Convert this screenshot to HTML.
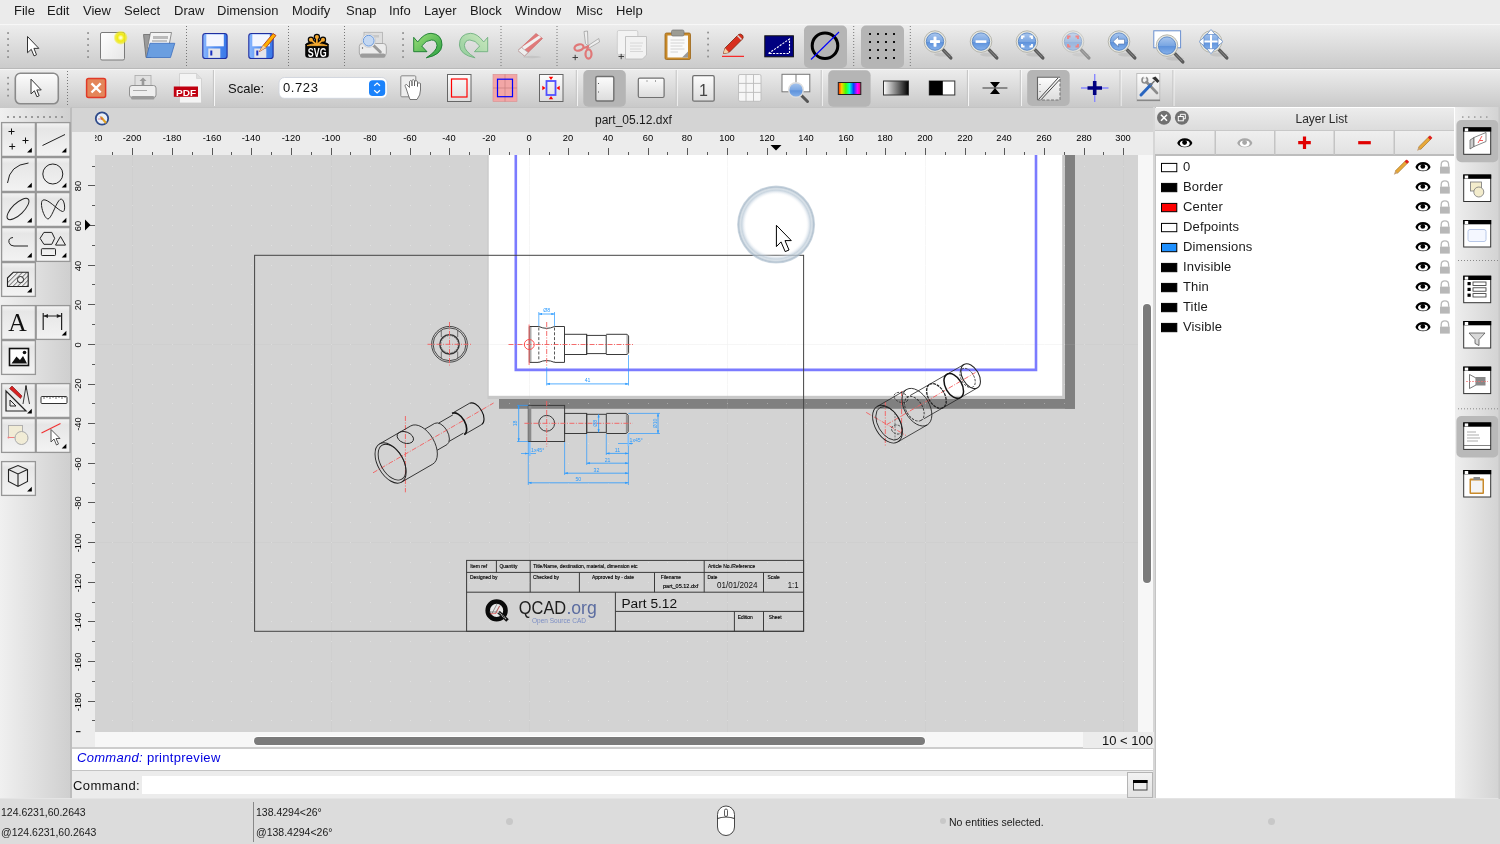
<!DOCTYPE html><html><head><meta charset="utf-8"><style>
*{margin:0;padding:0;box-sizing:border-box}
html,body{width:1500px;height:844px;overflow:hidden;background:#ececec;font-family:"Liberation Sans",sans-serif;color:#222}
.a{position:absolute}
svg{position:absolute;overflow:visible}
#menubar{left:0;top:0;width:1500px;height:24px;background:#ebebeb}
#menubar span{position:absolute;top:3.3px;font-size:13px;color:#1a1a1a;line-height:15px}
#tb1{left:0;top:24px;width:1500px;height:45px;background:linear-gradient(#ededed,#cbcbcb);border-top:1px solid #f7f7f7;border-bottom:1px solid #b9b9b9}
#tb2{left:0;top:69px;width:1500px;height:38.5px;background:linear-gradient(#ececec,#c9c9c9);border-top:1px solid #f5f5f5;border-bottom:1px solid #b4b4b4}
#toolbox{left:0;top:107px;width:72px;height:692px;background:linear-gradient(90deg,#f0f0f0,#cfcfcf);border-right:2px solid #bdbdbd;border-top:1px solid #c8c8c8}
#mdititle{left:72px;top:107px;width:1082px;height:25px;background:#d4d4d4;border-top:1px solid #c4c4c4}
#hruler{left:72px;top:132px;width:1082px;height:23px;background:#ececec}
#vruler{left:72px;top:155px;width:23px;height:593px;background:#ececec}
#canvas{left:95px;top:155px;width:1043px;height:577px;background:#d3d3d3;overflow:hidden}
#vscroll{left:1138px;top:155px;width:16px;height:593px;background:#f7f7f7}
#hscroll{left:95px;top:732px;width:1059px;height:16px;background:#f7f7f7}
#cmdhist{left:72px;top:747px;width:1082px;height:24px;background:#fff;border-top:2px solid #cdcdcd;border-bottom:1px solid #c4c4c4}
#cmdrow{left:72px;top:771px;width:1082px;height:28px;background:#ececec}
#status{left:0;top:798px;width:1500px;height:46px;background:#dcdcdc;border-top:1px solid #e4e4e4}
#layerpanel{left:1153px;top:107px;width:302px;height:692px;background:#fff;border-left:2px solid #d6d6d6;box-shadow:inset 1px 0 0 #c4c4c4}
body{will-change:transform}
#rdock{left:1455px;top:107px;width:45px;height:692px;background:linear-gradient(90deg,#eeeeee,#d2d2d2)}

.hl{top:-0.5px;width:40px;text-align:center;font-size:10px;line-height:12px;color:#000;transform:scale(0.93)}
.vl{left:58px;width:40px;height:14px;text-align:center;font-size:10px;line-height:14px;color:#000;transform:rotate(-90deg) scale(0.93)}
</style></head><body><div id="menubar" class="a"><span style="left:14px">File</span><span style="left:47px">Edit</span><span style="left:83px">View</span><span style="left:124px">Select</span><span style="left:174px">Draw</span><span style="left:217px">Dimension</span><span style="left:292px">Modify</span><span style="left:346px">Snap</span><span style="left:389px">Info</span><span style="left:424px">Layer</span><span style="left:470px">Block</span><span style="left:515px">Window</span><span style="left:576px">Misc</span><span style="left:616px">Help</span></div>
<div id="tb1" class="a"></div><div id="tb2" class="a"></div>
<svg class="a" style="left:0;top:0" width="1500" height="110" viewBox="0 0 1500 110"><defs><linearGradient id="lens" x1="0" y1="0" x2="0" y2="1"><stop offset="0" stop-color="#a9c6ee"/><stop offset="0.5" stop-color="#7aa6e2"/><stop offset="0.55" stop-color="#5f93dc"/><stop offset="1" stop-color="#86b1ea"/></linearGradient><linearGradient id="paper" x1="0" y1="0" x2="1" y2="1"><stop offset="0" stop-color="#ffffff"/><stop offset="1" stop-color="#e6e6e6"/></linearGradient><linearGradient id="flop" x1="0" y1="0" x2="1" y2="0"><stop offset="0" stop-color="#8ab8ff"/><stop offset="0.5" stop-color="#4f8cf0"/><stop offset="1" stop-color="#3a78e8"/></linearGradient><linearGradient id="btn" x1="0" y1="0" x2="0" y2="1"><stop offset="0" stop-color="#fdfdfd"/><stop offset="1" stop-color="#dcdcdc"/></linearGradient><linearGradient id="rainbow" x1="0" y1="0" x2="1" y2="0"><stop offset="0" stop-color="#ff2000"/><stop offset="0.15" stop-color="#ffd000"/><stop offset="0.33" stop-color="#40ff00"/><stop offset="0.5" stop-color="#00ffd0"/><stop offset="0.68" stop-color="#0040ff"/><stop offset="0.85" stop-color="#ff00ff"/><stop offset="1" stop-color="#ff0060"/></linearGradient><linearGradient id="grey" x1="0" y1="0" x2="1" y2="0"><stop offset="0" stop-color="#fff"/><stop offset="1" stop-color="#000"/></linearGradient><radialGradient id="glow"><stop offset="0.1" stop-color="#ffffd0"/><stop offset="0.45" stop-color="#f2ec10"/><stop offset="0.75" stop-color="#eee820" stop-opacity="0.8"/><stop offset="1" stop-color="#f0f000" stop-opacity="0"/></radialGradient><linearGradient id="green" x1="0" y1="0" x2="1" y2="1"><stop offset="0" stop-color="#9ee07a"/><stop offset="1" stop-color="#2aa040"/></linearGradient><linearGradient id="green2" x1="1" y1="0" x2="0" y2="1"><stop offset="0" stop-color="#cde9c0"/><stop offset="1" stop-color="#90cc9a"/></linearGradient></defs><rect x="7.2" y="32.2" width="1.7" height="1.7" fill="#8a8a8a"/><rect x="7.2" y="38.2" width="1.7" height="1.7" fill="#8a8a8a"/><rect x="7.2" y="44.2" width="1.7" height="1.7" fill="#8a8a8a"/><rect x="7.2" y="50.2" width="1.7" height="1.7" fill="#8a8a8a"/><rect x="7.2" y="56.2" width="1.7" height="1.7" fill="#8a8a8a"/><path d="M27.50 36.50L27.50 52.78L31.28 49.31L34.01 55.92L36.53 54.77L33.91 48.37L38.84 48.37Z" fill="#fff" stroke="#333" stroke-width="1" stroke-linejoin="round"/><rect x="87.2" y="32.2" width="1.7" height="1.7" fill="#8a8a8a"/><rect x="87.2" y="38.2" width="1.7" height="1.7" fill="#8a8a8a"/><rect x="87.2" y="44.2" width="1.7" height="1.7" fill="#8a8a8a"/><rect x="87.2" y="50.2" width="1.7" height="1.7" fill="#8a8a8a"/><rect x="87.2" y="56.2" width="1.7" height="1.7" fill="#8a8a8a"/><rect x="100.5" y="32.5" width="24" height="27.5" rx="1.5" fill="url(#paper)" stroke="#7a7a7a" stroke-width="1"/><circle cx="120.7" cy="37.7" r="7.2" fill="url(#glow)"/><line x1="186.5" y1="26" x2="186.5" y2="66" stroke="#777" stroke-width="1" stroke-dasharray="1 2"/><path d="M143.5 34.5H150L151 57.5H146Z" fill="#9a9a9a" stroke="#6a6a6a" stroke-width="0.8"/><path d="M150.5 32.5H171.5L168.5 48H147.5Z" fill="#f4f4f4" stroke="#777" stroke-width="0.8"/><rect x="153" y="36" width="15" height="3" fill="#bbb"/><rect x="152" y="40" width="15" height="2" fill="#c4c4c4"/><path d="M150 43.3H174.8L170.5 57.5H146.5Z" fill="#6a9ee0" stroke="#3c6fbf" stroke-width="0.8"/><rect x="202.8" y="33.5" width="24.3" height="25" rx="2.6" fill="url(#flop)" stroke="#1f2ea0" stroke-width="1.1"/><rect x="206.3" y="34.3" width="17.5" height="12" fill="#f3f6ff"/><rect x="208.3" y="48.5" width="12" height="9.3" fill="#e4e4ea"/><rect x="210.3" y="50.5" width="2" height="5" fill="#1a30c0"/><rect x="248.8" y="33.5" width="24.3" height="25" rx="2.6" fill="url(#flop)" stroke="#1f2ea0" stroke-width="1.1"/><rect x="252.3" y="34.3" width="17.5" height="12" fill="#f3f6ff"/><rect x="254.3" y="48.5" width="12" height="9.3" fill="#e4e4ea"/><rect x="256.3" y="50.5" width="2" height="5" fill="#1a30c0"/><path d="M259.5 51.5L263 45.5L273 33.5L276 35.5L266 47.5Z" fill="#ffb000" stroke="#b03010" stroke-width="0.8"/><path d="M259.5 51.5L263 45.5L266 47.5Z" fill="#f0d0a0"/><line x1="288.5" y1="26" x2="288.5" y2="66" stroke="#777" stroke-width="1" stroke-dasharray="1 2"/><rect x="305.2" y="43" width="23.6" height="14.8" rx="3" fill="#050505"/><line x1="316.9" y1="45" x2="310.9" y2="39.7" stroke="#050505" stroke-width="4.2" stroke-linecap="round"/><circle cx="310.9" cy="39.7" r="3.2" fill="#050505"/><line x1="316.9" y1="45" x2="316.9" y2="36.9" stroke="#050505" stroke-width="4.2" stroke-linecap="round"/><circle cx="316.9" cy="36.9" r="3.2" fill="#050505"/><line x1="316.9" y1="45" x2="323" y2="39.7" stroke="#050505" stroke-width="4.2" stroke-linecap="round"/><circle cx="323" cy="39.7" r="3.2" fill="#050505"/><path d="M306 45.5Q311 41 316.9 45Q323 41 328 45.5" stroke="#050505" stroke-width="3" fill="none"/><line x1="316.9" y1="45" x2="310.9" y2="39.7" stroke="#f5a930" stroke-width="1.7"/><circle cx="310.9" cy="39.7" r="2" fill="#f5a930"/><line x1="316.9" y1="45" x2="316.9" y2="36.9" stroke="#f5a930" stroke-width="1.7"/><circle cx="316.9" cy="36.9" r="2" fill="#f5a930"/><line x1="316.9" y1="45" x2="323" y2="39.7" stroke="#f5a930" stroke-width="1.7"/><circle cx="323" cy="39.7" r="2" fill="#f5a930"/><path d="M307 45.6Q312 43.2 316.9 44.3Q322 43.2 327.2 45.6Z" fill="#f5a930" stroke="#f5a930" stroke-width="0.8"/><text x="317.2" y="57.2" font-size="13.2" font-weight="bold" fill="#fff" text-anchor="middle" font-family="Liberation Sans" textLength="18.7" lengthAdjust="spacingAndGlyphs">SVG</text><line x1="344.5" y1="26" x2="344.5" y2="66" stroke="#777" stroke-width="1" stroke-dasharray="1 2"/><rect x="364" y="32.3" width="18.5" height="13" fill="#dedede" stroke="#b0b0b0" stroke-width="0.8"/><rect x="367" y="35" width="12" height="2.5" fill="#c8c8c8"/><rect x="359.3" y="43.5" width="27" height="12.5" rx="3" fill="#ececec" stroke="#a0a0a0" stroke-width="0.9"/><rect x="360" y="53.5" width="25.5" height="4.2" rx="2" fill="#9c9c9c"/><circle cx="362.5" cy="48" r="0.7" fill="#555"/><line x1="373" y1="45" x2="380.3" y2="52" stroke="#9a9a9a" stroke-width="3" stroke-linecap="round"/><circle cx="368.7" cy="40.7" r="6.8" fill="#f4f4f4" stroke="#c8c8c8" stroke-width="0.8"/><circle cx="368.7" cy="40.7" r="5.4" fill="#c4d8f2" stroke="#5b8fd8" stroke-width="0.9"/><rect x="402.2" y="32.2" width="1.7" height="1.7" fill="#8a8a8a"/><rect x="402.2" y="38.2" width="1.7" height="1.7" fill="#8a8a8a"/><rect x="402.2" y="44.2" width="1.7" height="1.7" fill="#8a8a8a"/><rect x="402.2" y="50.2" width="1.7" height="1.7" fill="#8a8a8a"/><rect x="402.2" y="56.2" width="1.7" height="1.7" fill="#8a8a8a"/><path d="M413.7 37.3L417.7 42Q424 33.3 431 33.3Q442 34 442 45Q441.5 55 426.3 57.8Q437 51 437 45.5Q436.5 40 431.5 40Q426 40 421.7 46L427 51.7H413.7Z" fill="url(#green)" stroke="#177a2e" stroke-width="0.9" stroke-linejoin="round"/><path d="M487.7 37.3L483.7 42.0Q477.4 33.3 470.4 33.3Q459.4 34.0 459.4 45.0Q459.9 55.0 475.1 57.8Q464.4 51.0 464.4 45.5Q464.9 40.0 469.9 40.0Q475.4 40.0 479.7 46.0L474.4 51.7H487.7Z" fill="url(#green2)" stroke="#70b080" stroke-width="0.9" stroke-linejoin="round"/><line x1="501" y1="26" x2="501" y2="66" stroke="#777" stroke-width="1" stroke-dasharray="1 2"/><path d="M518 50.5L536 33.5L542.5 38.5L524.5 56Z" fill="#e07a7a" stroke="#c86060" stroke-width="0.6"/><path d="M522 47L539 35.5L541 37.5L524 50Z" fill="#f0f0f0"/><path d="M518 50.5L521.5 47.5L528 52.5L524.5 56Z" fill="#eee" stroke="#aaa" stroke-width="0.6"/><ellipse cx="532" cy="57" rx="9" ry="1.2" fill="#bbb" opacity="0.6"/><line x1="557" y1="26" x2="557" y2="66" stroke="#777" stroke-width="1" stroke-dasharray="1 2"/><path d="M585.5 43.5L584 31.5L587.5 31L588 46Z" fill="#eee" stroke="#999" stroke-width="0.7"/><path d="M587.5 46L598.8 38.5L599.5 42L589 48Z" fill="#eee" stroke="#999" stroke-width="0.7"/><ellipse cx="579" cy="47.5" rx="4.6" ry="3" fill="none" stroke="#e07878" stroke-width="2.2" transform="rotate(-15 579 47.5)"/><ellipse cx="588.5" cy="54" rx="3" ry="4.6" fill="none" stroke="#e07878" stroke-width="2.2"/><path d="M584 48L588 46.5L587 50" stroke="#e07878" stroke-width="2" fill="none"/><path d="M572.5 57.5H578M575.2 54.8V60.2" stroke="#333" stroke-width="0.9"/><rect x="617.3" y="30.5" width="20.5" height="24" rx="1.5" fill="#f3f3f3" stroke="#c8c8c8" stroke-width="0.8"/><path d="M625.5 36.5H646.5V55L642.5 59H625.5Z" fill="#f2f2f2" stroke="#bdbdbd" stroke-width="0.9"/><path d="M630 43H643M630 46H642M630 49H641M630 51.5H643" stroke="#d4d4d4" stroke-width="0.9"/><path d="M618.5 56.5H624M621.2 53.8V59.2" stroke="#333" stroke-width="0.9"/><rect x="665" y="33" width="25.5" height="26.5" rx="1.5" fill="#c98a2a" stroke="#9a6418" stroke-width="0.8"/><rect x="667.5" y="35.5" width="20.5" height="22" fill="#fafafa"/><rect x="671.5" y="30" width="12.5" height="6" rx="1.5" fill="#9c9c94" stroke="#777" stroke-width="0.7"/><path d="M670.5 40H684.5M670.5 43H684.5M670.5 46H682.5M670.5 49H684.5M670.5 52H678" stroke="#cfcfcf" stroke-width="0.9"/><path d="M682 57.5L688 51.5V57.5Z" fill="#999"/><rect x="707.2" y="31.7" width="1.7" height="1.7" fill="#8a8a8a"/><rect x="707.2" y="37.7" width="1.7" height="1.7" fill="#8a8a8a"/><rect x="707.2" y="43.7" width="1.7" height="1.7" fill="#8a8a8a"/><rect x="707.2" y="49.7" width="1.7" height="1.7" fill="#8a8a8a"/><rect x="707.2" y="55.7" width="1.7" height="1.7" fill="#8a8a8a"/><line x1="722" y1="56.3" x2="744" y2="56.3" stroke="#f00" stroke-width="1"/><path d="M723.5 53.5L725 48L738.5 34.5Q740.5 33.2 742.5 35.2Q744 37.2 742.5 39L729 52.5Z" fill="#d83020" stroke="#7a2810" stroke-width="0.8"/><path d="M723.5 53.5L725 48L729 52.5Z" fill="#f3d3a8"/><path d="M737.5 35.5L741.5 39.5" stroke="#ddd" stroke-width="1.5"/><rect x="764.8" y="35.8" width="28.6" height="21" fill="#000080" stroke="#111" stroke-width="1"/><path d="M768.5 53.5L789.5 39V53.5Z" fill="none" stroke="#fff" stroke-width="1.1" stroke-dasharray="2.2 1.2"/><rect x="804" y="25.5" width="43" height="42.5" rx="5" fill="#b5b5b5"/><circle cx="825" cy="45.7" r="12.8" fill="none" stroke="#000" stroke-width="3"/><line x1="811" y1="59.5" x2="839" y2="32" stroke="#0000ff" stroke-width="1.1"/><line x1="853.7" y1="26" x2="853.7" y2="66" stroke="#777" stroke-width="1" stroke-dasharray="1 2"/><rect x="861" y="25.5" width="43" height="42.5" rx="5" fill="#b5b5b5"/><rect x="869" y="33" width="2" height="2" fill="#111"/><rect x="869" y="41" width="2" height="2" fill="#111"/><rect x="869" y="49" width="2" height="2" fill="#111"/><rect x="869" y="57" width="2" height="2" fill="#111"/><rect x="877" y="33" width="2" height="2" fill="#111"/><rect x="877" y="41" width="2" height="2" fill="#111"/><rect x="877" y="49" width="2" height="2" fill="#111"/><rect x="877" y="57" width="2" height="2" fill="#111"/><rect x="885" y="33" width="2" height="2" fill="#111"/><rect x="885" y="41" width="2" height="2" fill="#111"/><rect x="885" y="49" width="2" height="2" fill="#111"/><rect x="885" y="57" width="2" height="2" fill="#111"/><rect x="893" y="33" width="2" height="2" fill="#111"/><rect x="893" y="41" width="2" height="2" fill="#111"/><rect x="893" y="49" width="2" height="2" fill="#111"/><rect x="893" y="57" width="2" height="2" fill="#111"/><line x1="910.3" y1="26" x2="910.3" y2="66" stroke="#777" stroke-width="1" stroke-dasharray="1 2"/><ellipse cx="943" cy="54.6" rx="9" ry="2" fill="#000" opacity="0.08"/><line x1="942.5" y1="49.1" x2="950.8" y2="57.900000000000006" stroke="#5a5a5a" stroke-width="3.4" stroke-linecap="round"/><line x1="944" y1="50.6" x2="950" y2="56.900000000000006" stroke="#8a8a8a" stroke-width="1" stroke-linecap="round"/><circle cx="935" cy="41.6" r="10.8" fill="#e8e8e0" stroke="#a8a8a0" stroke-width="0.8"/><circle cx="935" cy="41.6" r="8.7" fill="url(#lens)" stroke="#4a7bc0" stroke-width="0.8"/><path d="M930.2 41.6H939.8M935 36.8V46.4" stroke="#fff" stroke-width="2.8"/><path d="M930.2 41.6H939.8M935 36.8V46.4" stroke="#fff" stroke-width="2.2"/><ellipse cx="989" cy="54.6" rx="9" ry="2" fill="#000" opacity="0.08"/><line x1="988.5" y1="49.1" x2="996.8" y2="57.900000000000006" stroke="#5a5a5a" stroke-width="3.4" stroke-linecap="round"/><line x1="990" y1="50.6" x2="996" y2="56.900000000000006" stroke="#8a8a8a" stroke-width="1" stroke-linecap="round"/><circle cx="981" cy="41.6" r="10.8" fill="#e8e8e0" stroke="#a8a8a0" stroke-width="0.8"/><circle cx="981" cy="41.6" r="8.7" fill="url(#lens)" stroke="#4a7bc0" stroke-width="0.8"/><path d="M975.6 41.6H986.4" stroke="#fff" stroke-width="2.6"/><ellipse cx="1035" cy="54.6" rx="9" ry="2" fill="#000" opacity="0.08"/><line x1="1034.5" y1="49.1" x2="1042.8" y2="57.900000000000006" stroke="#5a5a5a" stroke-width="3.4" stroke-linecap="round"/><line x1="1036" y1="50.6" x2="1042" y2="56.900000000000006" stroke="#8a8a8a" stroke-width="1" stroke-linecap="round"/><circle cx="1027" cy="41.6" r="10.8" fill="#e8e8e0" stroke="#a8a8a0" stroke-width="0.8"/><circle cx="1027" cy="41.6" r="8.7" fill="url(#lens)" stroke="#4a7bc0" stroke-width="0.8"/><path d="M1022 39V36.5H1024.5M1029.5 36.5H1032V39M1032 44V46.5H1029.5M1024.5 46.5H1022V44" stroke="#fff" stroke-width="1.8" fill="none"/><g opacity="0.55"><ellipse cx="1081" cy="54.6" rx="9" ry="2" fill="#000" opacity="0.08"/><line x1="1080.5" y1="49.1" x2="1088.8" y2="57.900000000000006" stroke="#5a5a5a" stroke-width="3.4" stroke-linecap="round"/><line x1="1082" y1="50.6" x2="1088" y2="56.900000000000006" stroke="#8a8a8a" stroke-width="1" stroke-linecap="round"/><circle cx="1073" cy="41.6" r="10.8" fill="#e8e8e0" stroke="#a8a8a0" stroke-width="0.8"/><circle cx="1073" cy="41.6" r="8.7" fill="url(#lens)" stroke="#4a7bc0" stroke-width="0.8"/><path d="M1068 39V36.5H1070.5M1075.5 36.5H1078V39M1078 44V46.5H1075.5M1070.5 46.5H1068V44" stroke="#ff3a3a" stroke-width="1.8" fill="none"/></g><ellipse cx="1127" cy="54.6" rx="9" ry="2" fill="#000" opacity="0.08"/><line x1="1126.5" y1="49.1" x2="1134.8" y2="57.900000000000006" stroke="#5a5a5a" stroke-width="3.4" stroke-linecap="round"/><line x1="1128" y1="50.6" x2="1134" y2="56.900000000000006" stroke="#8a8a8a" stroke-width="1" stroke-linecap="round"/><circle cx="1119" cy="41.6" r="10.8" fill="#e8e8e0" stroke="#a8a8a0" stroke-width="0.8"/><circle cx="1119" cy="41.6" r="8.7" fill="url(#lens)" stroke="#4a7bc0" stroke-width="0.8"/><path d="M1113 41.6L1118.5 36.5V39.3H1124.5V44H1118.5V46.8Z" fill="#fff" stroke="#4a6ea8" stroke-width="0.6"/><rect x="1153.8" y="30.8" width="26.8" height="17" fill="#fff" stroke="#6a90d0" stroke-width="1"/><ellipse cx="1175" cy="58.6" rx="9" ry="2" fill="#000" opacity="0.08"/><line x1="1174.5" y1="53.1" x2="1182.8" y2="61.900000000000006" stroke="#5a5a5a" stroke-width="3.4" stroke-linecap="round"/><line x1="1176" y1="54.6" x2="1182" y2="60.900000000000006" stroke="#8a8a8a" stroke-width="1" stroke-linecap="round"/><circle cx="1167" cy="45.6" r="10.8" fill="#e8e8e0" stroke="#a8a8a0" stroke-width="0.8"/><circle cx="1167" cy="45.6" r="8.7" fill="url(#lens)" stroke="#4a7bc0" stroke-width="0.8"/><ellipse cx="1219" cy="54.6" rx="9" ry="2" fill="#000" opacity="0.08"/><line x1="1218.5" y1="49.1" x2="1226.8" y2="57.900000000000006" stroke="#5a5a5a" stroke-width="3.4" stroke-linecap="round"/><line x1="1220" y1="50.6" x2="1226" y2="56.900000000000006" stroke="#8a8a8a" stroke-width="1" stroke-linecap="round"/><circle cx="1211" cy="41.6" r="10.8" fill="#e8e8e0" stroke="#a8a8a0" stroke-width="0.8"/><circle cx="1211" cy="41.6" r="8.7" fill="url(#lens)" stroke="#4a7bc0" stroke-width="0.8"/><path d="M1211 33V50M1203 41.6H1219" stroke="#fff" stroke-width="2"/><path d="M1211 29.5L1206.8 34.5H1215.2ZM1211 53.7L1206.8 48.7H1215.2ZM1199 41.6L1204 37.4V45.8ZM1223 41.6L1218 37.4V45.8Z" fill="#fff" stroke="#5a86c8" stroke-width="0.7" stroke-linejoin="round"/><rect x="7.2" y="76.9" width="1.7" height="1.7" fill="#8a8a8a"/><rect x="7.2" y="82.8" width="1.7" height="1.7" fill="#8a8a8a"/><rect x="7.2" y="88.7" width="1.7" height="1.7" fill="#8a8a8a"/><rect x="7.2" y="94.8" width="1.7" height="1.7" fill="#8a8a8a"/><rect x="15.3" y="73.3" width="43" height="30.5" rx="5" fill="url(#btn)" stroke="#8a8a8a" stroke-width="1.6"/><path d="M31.00 79.20L31.00 93.92L34.42 90.79L36.89 96.78L39.17 95.73L36.80 89.94L41.26 89.94Z" fill="#fff" stroke="#333" stroke-width="1" stroke-linejoin="round"/><line x1="67.5" y1="71" x2="67.5" y2="105" stroke="#777" stroke-width="1" stroke-dasharray="1 2"/><rect x="86.6" y="78.4" width="19" height="19" rx="2" fill="#e4865a" stroke="#e03a28" stroke-width="1.5"/><path d="M91.5 83.3L100.7 92.5M100.7 83.3L91.5 92.5" stroke="#fff" stroke-width="2.4"/><rect x="135" y="75.5" width="16" height="11" fill="#e0e0e0" stroke="#aaa" stroke-width="0.8"/><path d="M143 77.5L139.5 81H141.7V85H144.3V81H146.5Z" fill="#999"/><rect x="129.5" y="85.5" width="26.5" height="12" rx="2.5" fill="#eee" stroke="#888" stroke-width="0.9"/><rect x="131" y="96" width="23.5" height="3.5" rx="1.5" fill="#9a9a9a"/><rect x="133" y="90" width="14" height="1" fill="#aaa"/><path d="M179.5 73.5H196.5L201.5 78.5V103H179.5Z" fill="#f4f4f4" stroke="#ccc" stroke-width="0.8"/><path d="M196.5 73.5V78.5H201.5" fill="#ddd" stroke="#ccc" stroke-width="0.6"/><rect x="173.8" y="86.5" width="24.2" height="10.3" fill="#c00010"/><text x="186" y="95.6" font-size="9.2" font-weight="bold" fill="#fff" text-anchor="middle" font-family="Liberation Sans" textLength="20" lengthAdjust="spacingAndGlyphs">PDF</text><rect x="213.9" y="70" width="1" height="36" fill="#fafafa"/><rect x="212.9" y="70" width="1" height="36" fill="#c4c4c4"/><rect x="279" y="77.5" width="108.3" height="20.8" rx="5.5" fill="#fff" stroke="#cfd4dc" stroke-width="0.9"/><rect x="369" y="80.2" width="16.2" height="15.8" rx="3.8" fill="#1a82fb"/><path d="M374.2 85.8L377.1 83L380 85.8M374.2 90.2L377.1 93L380 90.2" stroke="#fff" stroke-width="1.2" fill="none"/><rect x="400.8" y="75.8" width="15" height="21" rx="1" fill="#eee" stroke="#888" stroke-width="1"/><path d="M406 88Q404 84.5 406.5 84.5L409.5 87.5V81.5Q410.5 79.5 412 81.5V86V80.5Q413 78.5 414.5 80.5V86V81.5Q416 79.5 417.5 81.5V86.5V83.5Q419 82 420.5 83.5V90Q420.5 95 417 99.5H410Q408.5 96 406 88Z" fill="#fff" stroke="#555" stroke-width="0.8"/><rect x="447.5" y="74.5" width="23.5" height="27" fill="url(#btn)" stroke="#666" stroke-width="1"/><rect x="451.5" y="79" width="15.5" height="18" fill="none" stroke="#f00" stroke-width="1.2"/><rect x="493" y="74.3" width="24" height="27.3" fill="#f2a6a6" stroke="#d89090" stroke-width="0.6"/><path d="M505 74.3V101.6M493 88H517" stroke="#c88080" stroke-width="0.7"/><rect x="497.5" y="79.2" width="15" height="17.5" fill="none" stroke="#0000ff" stroke-width="1.2"/><rect x="539.5" y="74.5" width="23.5" height="27" fill="url(#btn)" stroke="#666" stroke-width="1"/><rect x="546.5" y="81" width="9" height="14" fill="none" stroke="#5050ff" stroke-width="1.8"/><path d="M551 80L548.8 76.8H553.2ZM551 96L548.8 99.2H553.2ZM545.5 88L542.3 85.8V90.2ZM556.5 88L559.7 85.8V90.2Z" fill="#f00"/><rect x="576.8" y="70" width="1" height="36" fill="#fafafa"/><rect x="575.8" y="70" width="1" height="36" fill="#c4c4c4"/><rect x="583.3" y="70" width="42.5" height="36.8" rx="5" fill="#b5b5b5"/><rect x="595.8" y="76.5" width="18" height="24.5" rx="1.5" fill="url(#btn)" stroke="#707070" stroke-width="1.4"/><rect x="598" y="83" width="1" height="1" fill="#555"/><rect x="598" y="91.5" width="1" height="1" fill="#555"/><rect x="638.3" y="78.2" width="25.8" height="19.3" rx="1.5" fill="url(#btn)" stroke="#707070" stroke-width="1.2"/><rect x="646.5" y="80.5" width="1" height="1" fill="#555"/><rect x="655" y="80.5" width="1" height="1" fill="#555"/><rect x="676.7" y="70" width="1" height="36" fill="#fafafa"/><rect x="675.7" y="70" width="1" height="36" fill="#c4c4c4"/><rect x="692.7" y="75.7" width="21.5" height="25.5" rx="1.5" fill="url(#btn)" stroke="#707070" stroke-width="1.3"/><text x="703.5" y="96" font-size="16" fill="#444" text-anchor="middle" font-family="Liberation Sans">1</text><rect x="738.5" y="74.5" width="22.5" height="26.8" rx="1.5" fill="#f6f6f6" stroke="#bbb" stroke-width="0.9"/><path d="M746 74.5V101.3M753.5 74.5V101.3M738.5 83.4H761M738.5 92.4H761" stroke="#bbb" stroke-width="0.9"/><rect x="782" y="74.3" width="27.8" height="17.5" fill="#fff" stroke="#777" stroke-width="1"/><line x1="796" y1="74.3" x2="796" y2="91.8" stroke="#777"/><line x1="801" y1="95" x2="807.5" y2="101.5" stroke="#555" stroke-width="3" stroke-linecap="round"/><circle cx="796" cy="90" r="7.3" fill="url(#lens)" stroke="#ddd" stroke-width="1.4"/><rect x="821.7" y="70" width="1" height="36" fill="#fafafa"/><rect x="820.7" y="70" width="1" height="36" fill="#c4c4c4"/><rect x="828.2" y="70.2" width="42.39999999999998" height="36.599999999999994" rx="5" fill="#b5b5b5"/><rect x="838.3" y="82.5" width="22.5" height="12" fill="url(#rainbow)" stroke="#222" stroke-width="1"/><rect x="883.5" y="81" width="25" height="14" fill="url(#grey)" stroke="#333" stroke-width="1"/><rect x="929.3" y="81" width="25.5" height="14" fill="#fff" stroke="#333" stroke-width="1"/><rect x="929.3" y="81" width="13.5" height="14" fill="#000"/><rect x="967.9" y="70" width="1" height="36" fill="#fafafa"/><rect x="966.9" y="70" width="1" height="36" fill="#c4c4c4"/><line x1="982.5" y1="88" x2="1007.4" y2="88" stroke="#555" stroke-width="1.2"/><path d="M990 82H1000L995 88ZM990 94H1000L995 88Z" fill="#000"/><rect x="1020.8" y="70" width="1" height="36" fill="#fafafa"/><rect x="1019.8" y="70" width="1" height="36" fill="#c4c4c4"/><rect x="1027.2" y="70" width="42.5" height="36" rx="5" fill="#b5b5b5"/><rect x="1037.5" y="77.2" width="22.5" height="22.8" fill="url(#btn)"/><path d="M1060 77.2H1037.5V100" fill="none" stroke="#666" stroke-width="1.1"/><path d="M1037.5 100H1060V77.2" fill="none" stroke="#777" stroke-width="1.1" stroke-dasharray="3 1.5"/><path d="M1038.5 99.5L1058 78M1041 99.8L1059.8 79.5" stroke="#444" stroke-width="1"/><rect x="1039.5" y="84" width="1" height="1" fill="#666"/><rect x="1039.5" y="91" width="1" height="1" fill="#666"/><path d="M1094.7 74V102M1081 88H1108.5" stroke="#8888ff" stroke-width="1.4"/><path d="M1094.7 81V95M1087.5 88H1102" stroke="#000080" stroke-width="3.6"/><rect x="1120.5" y="70" width="1" height="36" fill="#fafafa"/><rect x="1119.5" y="70" width="1" height="36" fill="#c4c4c4"/><rect x="1136.8" y="73.5" width="23" height="27.5" fill="url(#btn)" stroke="#bbb" stroke-width="0.9"/><rect x="1137" y="99.5" width="23" height="1.5" fill="#888"/><path d="M1146.5 82L1157 93" stroke="#8c8c8c" stroke-width="2.6" stroke-linecap="round"/><path d="M1141 95L1151 84.5" stroke="#2a66c0" stroke-width="3" stroke-linecap="round"/><path d="M1150 85.5L1154.5 81" stroke="#777" stroke-width="1.6"/><path d="M1152 78L1155.5 76.5L1159.5 81L1157.5 83Z" fill="#333"/><circle cx="1144.8" cy="80.2" r="2.8" fill="none" stroke="#8c8c8c" stroke-width="1.6"/><rect x="1143.5" y="76" width="2.6" height="3" fill="url(#btn)"/><rect x="1173.4" y="70" width="1" height="36" fill="#fafafa"/><rect x="1172.4" y="70" width="1" height="36" fill="#c4c4c4"/></svg>
<div class="a" style="left:228px;top:81px;font-size:13px;line-height:15px;color:#111">Scale:</div><div class="a" style="left:283px;top:80px;font-size:13px;line-height:15px;color:#111;letter-spacing:0.6px">0.723</div>
<div id="toolbox" class="a"></div>
<svg class="a" style="left:0;top:0" width="72" height="844" viewBox="0 0 72 844"><defs><linearGradient id="tbg" x1="0" y1="0" x2="0" y2="1"><stop offset="0" stop-color="#f4f4f4"/><stop offset="0.18" stop-color="#e6e6e6"/><stop offset="1" stop-color="#f3f3f3"/></linearGradient></defs><rect x="7.0" y="116" width="2" height="2" fill="#9a9a9a"/><rect x="13.0" y="116" width="2" height="2" fill="#9a9a9a"/><rect x="19.0" y="116" width="2" height="2" fill="#9a9a9a"/><rect x="25.0" y="116" width="2" height="2" fill="#9a9a9a"/><rect x="31.0" y="116" width="2" height="2" fill="#9a9a9a"/><rect x="37.0" y="116" width="2" height="2" fill="#9a9a9a"/><rect x="43.0" y="116" width="2" height="2" fill="#9a9a9a"/><rect x="49.0" y="116" width="2" height="2" fill="#9a9a9a"/><rect x="55.0" y="116" width="2" height="2" fill="#9a9a9a"/><rect x="61.0" y="116" width="2" height="2" fill="#9a9a9a"/><rect x="1.6" y="122.6" width="33.8" height="33.8" fill="url(#tbg)" stroke="#979797" stroke-width="1.3"/><path d="M31.8 147.7V152.4H27.1Z" fill="#000"/><rect x="36.2" y="122.6" width="33.8" height="33.8" fill="url(#tbg)" stroke="#979797" stroke-width="1.3"/><path d="M66.39999999999999 147.7V152.4H61.699999999999996Z" fill="#000"/><rect x="1.6" y="157.6" width="33.8" height="33.8" fill="url(#tbg)" stroke="#979797" stroke-width="1.3"/><path d="M31.8 182.7V187.4H27.1Z" fill="#000"/><rect x="36.2" y="157.6" width="33.8" height="33.8" fill="url(#tbg)" stroke="#979797" stroke-width="1.3"/><path d="M66.39999999999999 182.7V187.4H61.699999999999996Z" fill="#000"/><rect x="1.6" y="192.6" width="33.8" height="33.8" fill="url(#tbg)" stroke="#979797" stroke-width="1.3"/><path d="M31.8 217.7V222.4H27.1Z" fill="#000"/><rect x="36.2" y="192.6" width="33.8" height="33.8" fill="url(#tbg)" stroke="#979797" stroke-width="1.3"/><path d="M66.39999999999999 217.7V222.4H61.699999999999996Z" fill="#000"/><rect x="1.6" y="227.6" width="33.8" height="33.8" fill="url(#tbg)" stroke="#979797" stroke-width="1.3"/><path d="M31.8 252.7V257.4H27.1Z" fill="#000"/><rect x="36.2" y="227.6" width="33.8" height="33.8" fill="url(#tbg)" stroke="#979797" stroke-width="1.3"/><path d="M66.39999999999999 252.7V257.4H61.699999999999996Z" fill="#000"/><rect x="1.6" y="262.6" width="33.8" height="33.8" fill="url(#tbg)" stroke="#979797" stroke-width="1.3"/><path d="M31.8 287.7V292.4H27.1Z" fill="#000"/><path d="M8.5 131.5H14.5M11.5 128.5V134.5M22.5 140.5H28.5M25.5 137.5V143.5M9.2 146.5H15.2M12.2 143.5V149.5" stroke="#111" stroke-width="1"/><line x1="42.5" y1="145.5" x2="65" y2="134.5" stroke="#222" stroke-width="1"/><path d="M7.5 183Q9.5 165 28.5 163" fill="none" stroke="#222" stroke-width="1"/><circle cx="52.8" cy="174" r="10" fill="none" stroke="#222" stroke-width="1"/><ellipse cx="18" cy="209" rx="14.2" ry="5.6" transform="rotate(-44 18 209)" fill="none" stroke="#222" stroke-width="1"/><path d="M43 200C38.5 202 45 222 49 218.5C52.5 215.5 56.5 202 60 199.5C64.5 196.5 66.5 212.5 62.5 211.5C58 210.5 47.5 198 43 200Z" fill="none" stroke="#222" stroke-width="1"/><path d="M13 237.5Q8 238 9 242.5Q10 246 14 246H28" fill="none" stroke="#222" stroke-width="1"/><path d="M40.1 238.3L43.9 232.4H51.8L54.7 238.3L51.8 244.3H43.9Z" fill="none" stroke="#222" stroke-width="1"/><path d="M55.5 245.1L60.5 236.4L65.5 245.1Z" fill="none" stroke="#222" stroke-width="1"/><rect x="41.4" y="248.7" width="14.1" height="6.8" rx="0.8" fill="none" stroke="#222" stroke-width="1"/><path d="M7.5 277.8L13.3 272.2H28.2V286.5H7.5Z" fill="url(#hatch)" stroke="#222" stroke-width="1.1"/><circle cx="20.5" cy="279.6" r="3.1" fill="#eee" stroke="#222" stroke-width="1"/><defs><pattern id="hatch" width="3.2" height="3.2" patternUnits="userSpaceOnUse" patternTransform="rotate(45)"><rect width="3.2" height="3.2" fill="#f0f0f0"/><rect width="0.9" height="3.2" fill="#777"/></pattern></defs><rect x="1.6" y="305.6" width="33.8" height="33.8" fill="url(#tbg)" stroke="#979797" stroke-width="1.3"/><rect x="36.2" y="305.6" width="33.8" height="33.8" fill="url(#tbg)" stroke="#979797" stroke-width="1.3"/><path d="M66.39999999999999 330.7V335.4H61.699999999999996Z" fill="#000"/><rect x="1.6" y="340.6" width="33.8" height="33.8" fill="url(#tbg)" stroke="#979797" stroke-width="1.3"/><text x="17.6" y="331.2" font-size="26" font-family="Liberation Serif" fill="#111" text-anchor="middle" textLength="18.5" lengthAdjust="spacingAndGlyphs">A</text><path d="M43.2 313V330M61.6 313V330M43.5 316H61.3" stroke="#222" stroke-width="1.2" fill="none"/><path d="M43.5 316L48 314V318ZM61.3 316L56.8 314V318Z" fill="#222"/><rect x="9.5" y="348.5" width="19" height="17" fill="#fff" stroke="#111" stroke-width="1.6"/><path d="M11.5 363.5L16.5 356.5L20 360L23 356L27 363.5Z" fill="#111"/><circle cx="24.5" cy="352.5" r="1.8" fill="#111"/><rect x="1.6" y="383.6" width="33.8" height="33.8" fill="url(#tbg)" stroke="#979797" stroke-width="1.3"/><path d="M31.8 408.7V413.4H27.1Z" fill="#000"/><rect x="36.2" y="383.6" width="33.8" height="33.8" fill="url(#tbg)" stroke="#979797" stroke-width="1.3"/><rect x="1.6" y="418.6" width="33.8" height="33.8" fill="url(#tbg)" stroke="#979797" stroke-width="1.3"/><rect x="36.2" y="418.6" width="33.8" height="33.8" fill="url(#tbg)" stroke="#979797" stroke-width="1.3"/><path d="M66.39999999999999 443.7V448.4H61.699999999999996Z" fill="#000"/><path d="M6 411V391L26 411Z" fill="none" stroke="#222" stroke-width="1.2"/><path d="M10 406V400L16 406Z" fill="none" stroke="#222" stroke-width="1"/><path d="M9.5 388.5L12 386L22 396L20.5 398.5Z" fill="#d82020" stroke="#701010" stroke-width="0.6"/><path d="M26 390V385M26 386L23 404M26 386L29.5 404" stroke="#222" stroke-width="0.9" fill="none"/><rect x="41" y="396.5" width="26" height="7" rx="1" fill="#fff" stroke="#333" stroke-width="1"/><path d="M44 396.5V399M47 396.5V398M50 396.5V399M53 396.5V398M56 396.5V399M59 396.5V398M62 396.5V399M65 396.5V398" stroke="#333" stroke-width="0.7"/><rect x="8.5" y="425.5" width="14" height="12" fill="#f1ecd6" stroke="#aaa" stroke-width="0.9"/><circle cx="21.5" cy="438" r="6.5" fill="#f1ecd6" stroke="#aaa" stroke-width="1"/><path d="M8.5 437.5H14" stroke="#f08080" stroke-width="1"/><circle cx="8.5" cy="437.5" r="1" fill="#f08080"/><path d="M41.5 433L60.5 423.5" stroke="#f03030" stroke-width="1.2"/><path d="M51 429.5V442L54 439L56.5 445L58.5 444L56 438.5H60Z" fill="#fff" stroke="#444" stroke-width="0.9"/><rect x="1.6" y="461.6" width="33.8" height="33.8" fill="url(#tbg)" stroke="#979797" stroke-width="1.3"/><path d="M31.8 486.7V491.4H27.1Z" fill="#000"/><path d="M8.5 469.5L18 465.5L27.5 469.5V481.5L18 486.5L8.5 481.5Z M8.5 469.5L18 474L27.5 469.5M18 474V486.5" fill="none" stroke="#222" stroke-width="1.1"/></svg>
<div id="mdititle" class="a"></div>
<div id="hruler" class="a"></div><div id="vruler" class="a"></div>
<svg class="a" style="left:0;top:0" width="1500" height="844" viewBox="0 0 1500 844">
<rect x="112" y="152" width="1" height="3" fill="#585858"/>
<rect x="132" y="148" width="1" height="7" fill="#585858"/>
<rect x="152" y="152" width="1" height="3" fill="#585858"/>
<rect x="172" y="148" width="1" height="7" fill="#585858"/>
<rect x="192" y="152" width="1" height="3" fill="#585858"/>
<rect x="212" y="148" width="1" height="7" fill="#585858"/>
<rect x="231" y="152" width="1" height="3" fill="#585858"/>
<rect x="251" y="148" width="1" height="7" fill="#585858"/>
<rect x="271" y="152" width="1" height="3" fill="#585858"/>
<rect x="291" y="148" width="1" height="7" fill="#585858"/>
<rect x="311" y="152" width="1" height="3" fill="#585858"/>
<rect x="331" y="148" width="1" height="7" fill="#585858"/>
<rect x="350" y="152" width="1" height="3" fill="#585858"/>
<rect x="370" y="148" width="1" height="7" fill="#585858"/>
<rect x="390" y="152" width="1" height="3" fill="#585858"/>
<rect x="410" y="148" width="1" height="7" fill="#585858"/>
<rect x="430" y="152" width="1" height="3" fill="#585858"/>
<rect x="449" y="148" width="1" height="7" fill="#585858"/>
<rect x="469" y="152" width="1" height="3" fill="#585858"/>
<rect x="489" y="148" width="1" height="7" fill="#585858"/>
<rect x="509" y="152" width="1" height="3" fill="#585858"/>
<rect x="529" y="148" width="1" height="7" fill="#585858"/>
<rect x="549" y="152" width="1" height="3" fill="#585858"/>
<rect x="568" y="148" width="1" height="7" fill="#585858"/>
<rect x="588" y="152" width="1" height="3" fill="#585858"/>
<rect x="608" y="148" width="1" height="7" fill="#585858"/>
<rect x="628" y="152" width="1" height="3" fill="#585858"/>
<rect x="648" y="148" width="1" height="7" fill="#585858"/>
<rect x="667" y="152" width="1" height="3" fill="#585858"/>
<rect x="687" y="148" width="1" height="7" fill="#585858"/>
<rect x="707" y="152" width="1" height="3" fill="#585858"/>
<rect x="727" y="148" width="1" height="7" fill="#585858"/>
<rect x="747" y="152" width="1" height="3" fill="#585858"/>
<rect x="767" y="148" width="1" height="7" fill="#585858"/>
<rect x="786" y="152" width="1" height="3" fill="#585858"/>
<rect x="806" y="148" width="1" height="7" fill="#585858"/>
<rect x="826" y="152" width="1" height="3" fill="#585858"/>
<rect x="846" y="148" width="1" height="7" fill="#585858"/>
<rect x="866" y="152" width="1" height="3" fill="#585858"/>
<rect x="885" y="148" width="1" height="7" fill="#585858"/>
<rect x="905" y="152" width="1" height="3" fill="#585858"/>
<rect x="925" y="148" width="1" height="7" fill="#585858"/>
<rect x="945" y="152" width="1" height="3" fill="#585858"/>
<rect x="965" y="148" width="1" height="7" fill="#585858"/>
<rect x="985" y="152" width="1" height="3" fill="#585858"/>
<rect x="1004" y="148" width="1" height="7" fill="#585858"/>
<rect x="1024" y="152" width="1" height="3" fill="#585858"/>
<rect x="1044" y="148" width="1" height="7" fill="#585858"/>
<rect x="1064" y="152" width="1" height="3" fill="#585858"/>
<rect x="1084" y="148" width="1" height="7" fill="#585858"/>
<rect x="1103" y="152" width="1" height="3" fill="#585858"/>
<rect x="1123" y="148" width="1" height="7" fill="#585858"/>
</svg>
<div class="a" style="left:0;top:0;width:1500px;height:844px;overflow:hidden;pointer-events:none"><div class="a" style="left:95px;top:132px;width:1059px;height:16px;overflow:hidden"><div class="a" style="left:-95px;top:0;width:1500px;height:16px"><div class="a hl" style="left:73.00px">-220</div><div class="a hl" style="left:112.00px">-200</div><div class="a hl" style="left:152.00px">-180</div><div class="a hl" style="left:192.00px">-160</div><div class="a hl" style="left:231.00px">-140</div><div class="a hl" style="left:271.00px">-120</div><div class="a hl" style="left:311.00px">-100</div><div class="a hl" style="left:350.00px">-80</div><div class="a hl" style="left:390.00px">-60</div><div class="a hl" style="left:429.00px">-40</div><div class="a hl" style="left:469.00px">-20</div><div class="a hl" style="left:509.00px">0</div><div class="a hl" style="left:548.00px">20</div><div class="a hl" style="left:588.00px">40</div><div class="a hl" style="left:628.00px">60</div><div class="a hl" style="left:667.00px">80</div><div class="a hl" style="left:707.00px">100</div><div class="a hl" style="left:747.00px">120</div><div class="a hl" style="left:786.00px">140</div><div class="a hl" style="left:826.00px">160</div><div class="a hl" style="left:865.00px">180</div><div class="a hl" style="left:905.00px">200</div><div class="a hl" style="left:945.00px">220</div><div class="a hl" style="left:984.00px">240</div><div class="a hl" style="left:1024.00px">260</div><div class="a hl" style="left:1064.00px">280</div><div class="a hl" style="left:1103.00px">300</div></div></div></div>
<svg class="a" style="left:0;top:0" width="1500" height="844" viewBox="0 0 1500 844">
<rect x="92" y="720" width="3" height="1" fill="#585858"/>
<rect x="88" y="701" width="7" height="1" fill="#585858"/>
<rect x="92" y="681" width="3" height="1" fill="#585858"/>
<rect x="88" y="661" width="7" height="1" fill="#585858"/>
<rect x="92" y="641" width="3" height="1" fill="#585858"/>
<rect x="88" y="621" width="7" height="1" fill="#585858"/>
<rect x="92" y="602" width="3" height="1" fill="#585858"/>
<rect x="88" y="582" width="7" height="1" fill="#585858"/>
<rect x="92" y="562" width="3" height="1" fill="#585858"/>
<rect x="88" y="542" width="7" height="1" fill="#585858"/>
<rect x="92" y="522" width="3" height="1" fill="#585858"/>
<rect x="88" y="502" width="7" height="1" fill="#585858"/>
<rect x="92" y="483" width="3" height="1" fill="#585858"/>
<rect x="88" y="463" width="7" height="1" fill="#585858"/>
<rect x="92" y="443" width="3" height="1" fill="#585858"/>
<rect x="88" y="423" width="7" height="1" fill="#585858"/>
<rect x="92" y="403" width="3" height="1" fill="#585858"/>
<rect x="88" y="384" width="7" height="1" fill="#585858"/>
<rect x="92" y="364" width="3" height="1" fill="#585858"/>
<rect x="88" y="344" width="7" height="1" fill="#585858"/>
<rect x="92" y="324" width="3" height="1" fill="#585858"/>
<rect x="88" y="304" width="7" height="1" fill="#585858"/>
<rect x="92" y="284" width="3" height="1" fill="#585858"/>
<rect x="88" y="265" width="7" height="1" fill="#585858"/>
<rect x="92" y="245" width="3" height="1" fill="#585858"/>
<rect x="88" y="225" width="7" height="1" fill="#585858"/>
<rect x="92" y="205" width="3" height="1" fill="#585858"/>
<rect x="88" y="185" width="7" height="1" fill="#585858"/>
<rect x="92" y="166" width="3" height="1" fill="#585858"/>
</svg>
<div class="a" style="left:72px;top:155px;width:16px;height:577px;overflow:hidden"><div class="a" style="left:-72px;top:-155px;width:200px;height:844px"><div class="a vl" style="top:694.50px">-180</div><div class="a vl" style="top:654.50px">-160</div><div class="a vl" style="top:614.50px">-140</div><div class="a vl" style="top:575.50px">-120</div><div class="a vl" style="top:535.50px">-100</div><div class="a vl" style="top:495.50px">-80</div><div class="a vl" style="top:456.50px">-60</div><div class="a vl" style="top:416.50px">-40</div><div class="a vl" style="top:377.50px">-20</div><div class="a vl" style="top:337.50px">0</div><div class="a vl" style="top:297.50px">20</div><div class="a vl" style="top:258.50px">40</div><div class="a vl" style="top:218.50px">60</div><div class="a vl" style="top:178.50px">80</div><div class="a vl" style="top:139.50px">100</div></div></div>
<div id="canvas" class="a"><svg style="left:0;top:0" width="1043" height="577" viewBox="95 155 1043 577">
<rect x="95" y="155" width="1043" height="577" fill="#d3d3d3"/>
<rect x="499" y="399" width="576" height="9.8" fill="#808080"/>
<rect x="1065" y="150" width="10" height="258.8" fill="#808080"/>
<rect x="487.5" y="140" width="577.5" height="259" fill="#c8c8c8"/>
<rect x="488.7" y="140" width="573.5" height="255.8" fill="#ffffff"/>
<rect x="132" y="155" width="1" height="577" fill="#b8b8b8" fill-opacity="0.13"/>
<rect x="331" y="155" width="1" height="577" fill="#b8b8b8" fill-opacity="0.13"/>
<rect x="529" y="155" width="1" height="577" fill="#b8b8b8" fill-opacity="0.13"/>
<rect x="727" y="155" width="1" height="577" fill="#b8b8b8" fill-opacity="0.13"/>
<rect x="925" y="155" width="1" height="577" fill="#b8b8b8" fill-opacity="0.13"/>
<rect x="1123" y="155" width="1" height="577" fill="#b8b8b8" fill-opacity="0.13"/>
<rect x="95" y="344" width="1043" height="1" fill="#b8b8b8" fill-opacity="0.13"/>
<rect x="95" y="542" width="1043" height="1" fill="#b8b8b8" fill-opacity="0.13"/>
<path d="M112 720h1v1h-1zM112 701h1v1h-1zM112 681h1v1h-1zM112 661h1v1h-1zM112 641h1v1h-1zM112 621h1v1h-1zM112 602h1v1h-1zM112 582h1v1h-1zM112 562h1v1h-1zM112 542h1v1h-1zM112 522h1v1h-1zM112 502h1v1h-1zM112 483h1v1h-1zM112 463h1v1h-1zM112 443h1v1h-1zM112 423h1v1h-1zM112 403h1v1h-1zM112 384h1v1h-1zM112 364h1v1h-1zM112 344h1v1h-1zM112 324h1v1h-1zM112 304h1v1h-1zM112 284h1v1h-1zM112 265h1v1h-1zM112 245h1v1h-1zM112 225h1v1h-1zM112 205h1v1h-1zM112 185h1v1h-1zM112 166h1v1h-1zM132 720h1v1h-1zM132 701h1v1h-1zM132 681h1v1h-1zM132 661h1v1h-1zM132 641h1v1h-1zM132 621h1v1h-1zM132 602h1v1h-1zM132 582h1v1h-1zM132 562h1v1h-1zM132 542h1v1h-1zM132 522h1v1h-1zM132 502h1v1h-1zM132 483h1v1h-1zM132 463h1v1h-1zM132 443h1v1h-1zM132 423h1v1h-1zM132 403h1v1h-1zM132 384h1v1h-1zM132 364h1v1h-1zM132 344h1v1h-1zM132 324h1v1h-1zM132 304h1v1h-1zM132 284h1v1h-1zM132 265h1v1h-1zM132 245h1v1h-1zM132 225h1v1h-1zM132 205h1v1h-1zM132 185h1v1h-1zM132 166h1v1h-1zM152 720h1v1h-1zM152 701h1v1h-1zM152 681h1v1h-1zM152 661h1v1h-1zM152 641h1v1h-1zM152 621h1v1h-1zM152 602h1v1h-1zM152 582h1v1h-1zM152 562h1v1h-1zM152 542h1v1h-1zM152 522h1v1h-1zM152 502h1v1h-1zM152 483h1v1h-1zM152 463h1v1h-1zM152 443h1v1h-1zM152 423h1v1h-1zM152 403h1v1h-1zM152 384h1v1h-1zM152 364h1v1h-1zM152 344h1v1h-1zM152 324h1v1h-1zM152 304h1v1h-1zM152 284h1v1h-1zM152 265h1v1h-1zM152 245h1v1h-1zM152 225h1v1h-1zM152 205h1v1h-1zM152 185h1v1h-1zM152 166h1v1h-1zM172 720h1v1h-1zM172 701h1v1h-1zM172 681h1v1h-1zM172 661h1v1h-1zM172 641h1v1h-1zM172 621h1v1h-1zM172 602h1v1h-1zM172 582h1v1h-1zM172 562h1v1h-1zM172 542h1v1h-1zM172 522h1v1h-1zM172 502h1v1h-1zM172 483h1v1h-1zM172 463h1v1h-1zM172 443h1v1h-1zM172 423h1v1h-1zM172 403h1v1h-1zM172 384h1v1h-1zM172 364h1v1h-1zM172 344h1v1h-1zM172 324h1v1h-1zM172 304h1v1h-1zM172 284h1v1h-1zM172 265h1v1h-1zM172 245h1v1h-1zM172 225h1v1h-1zM172 205h1v1h-1zM172 185h1v1h-1zM172 166h1v1h-1zM192 720h1v1h-1zM192 701h1v1h-1zM192 681h1v1h-1zM192 661h1v1h-1zM192 641h1v1h-1zM192 621h1v1h-1zM192 602h1v1h-1zM192 582h1v1h-1zM192 562h1v1h-1zM192 542h1v1h-1zM192 522h1v1h-1zM192 502h1v1h-1zM192 483h1v1h-1zM192 463h1v1h-1zM192 443h1v1h-1zM192 423h1v1h-1zM192 403h1v1h-1zM192 384h1v1h-1zM192 364h1v1h-1zM192 344h1v1h-1zM192 324h1v1h-1zM192 304h1v1h-1zM192 284h1v1h-1zM192 265h1v1h-1zM192 245h1v1h-1zM192 225h1v1h-1zM192 205h1v1h-1zM192 185h1v1h-1zM192 166h1v1h-1zM212 720h1v1h-1zM212 701h1v1h-1zM212 681h1v1h-1zM212 661h1v1h-1zM212 641h1v1h-1zM212 621h1v1h-1zM212 602h1v1h-1zM212 582h1v1h-1zM212 562h1v1h-1zM212 542h1v1h-1zM212 522h1v1h-1zM212 502h1v1h-1zM212 483h1v1h-1zM212 463h1v1h-1zM212 443h1v1h-1zM212 423h1v1h-1zM212 403h1v1h-1zM212 384h1v1h-1zM212 364h1v1h-1zM212 344h1v1h-1zM212 324h1v1h-1zM212 304h1v1h-1zM212 284h1v1h-1zM212 265h1v1h-1zM212 245h1v1h-1zM212 225h1v1h-1zM212 205h1v1h-1zM212 185h1v1h-1zM212 166h1v1h-1zM231 720h1v1h-1zM231 701h1v1h-1zM231 681h1v1h-1zM231 661h1v1h-1zM231 641h1v1h-1zM231 621h1v1h-1zM231 602h1v1h-1zM231 582h1v1h-1zM231 562h1v1h-1zM231 542h1v1h-1zM231 522h1v1h-1zM231 502h1v1h-1zM231 483h1v1h-1zM231 463h1v1h-1zM231 443h1v1h-1zM231 423h1v1h-1zM231 403h1v1h-1zM231 384h1v1h-1zM231 364h1v1h-1zM231 344h1v1h-1zM231 324h1v1h-1zM231 304h1v1h-1zM231 284h1v1h-1zM231 265h1v1h-1zM231 245h1v1h-1zM231 225h1v1h-1zM231 205h1v1h-1zM231 185h1v1h-1zM231 166h1v1h-1zM251 720h1v1h-1zM251 701h1v1h-1zM251 681h1v1h-1zM251 661h1v1h-1zM251 641h1v1h-1zM251 621h1v1h-1zM251 602h1v1h-1zM251 582h1v1h-1zM251 562h1v1h-1zM251 542h1v1h-1zM251 522h1v1h-1zM251 502h1v1h-1zM251 483h1v1h-1zM251 463h1v1h-1zM251 443h1v1h-1zM251 423h1v1h-1zM251 403h1v1h-1zM251 384h1v1h-1zM251 364h1v1h-1zM251 344h1v1h-1zM251 324h1v1h-1zM251 304h1v1h-1zM251 284h1v1h-1zM251 265h1v1h-1zM251 245h1v1h-1zM251 225h1v1h-1zM251 205h1v1h-1zM251 185h1v1h-1zM251 166h1v1h-1zM271 720h1v1h-1zM271 701h1v1h-1zM271 681h1v1h-1zM271 661h1v1h-1zM271 641h1v1h-1zM271 621h1v1h-1zM271 602h1v1h-1zM271 582h1v1h-1zM271 562h1v1h-1zM271 542h1v1h-1zM271 522h1v1h-1zM271 502h1v1h-1zM271 483h1v1h-1zM271 463h1v1h-1zM271 443h1v1h-1zM271 423h1v1h-1zM271 403h1v1h-1zM271 384h1v1h-1zM271 364h1v1h-1zM271 344h1v1h-1zM271 324h1v1h-1zM271 304h1v1h-1zM271 284h1v1h-1zM271 265h1v1h-1zM271 245h1v1h-1zM271 225h1v1h-1zM271 205h1v1h-1zM271 185h1v1h-1zM271 166h1v1h-1zM291 720h1v1h-1zM291 701h1v1h-1zM291 681h1v1h-1zM291 661h1v1h-1zM291 641h1v1h-1zM291 621h1v1h-1zM291 602h1v1h-1zM291 582h1v1h-1zM291 562h1v1h-1zM291 542h1v1h-1zM291 522h1v1h-1zM291 502h1v1h-1zM291 483h1v1h-1zM291 463h1v1h-1zM291 443h1v1h-1zM291 423h1v1h-1zM291 403h1v1h-1zM291 384h1v1h-1zM291 364h1v1h-1zM291 344h1v1h-1zM291 324h1v1h-1zM291 304h1v1h-1zM291 284h1v1h-1zM291 265h1v1h-1zM291 245h1v1h-1zM291 225h1v1h-1zM291 205h1v1h-1zM291 185h1v1h-1zM291 166h1v1h-1zM311 720h1v1h-1zM311 701h1v1h-1zM311 681h1v1h-1zM311 661h1v1h-1zM311 641h1v1h-1zM311 621h1v1h-1zM311 602h1v1h-1zM311 582h1v1h-1zM311 562h1v1h-1zM311 542h1v1h-1zM311 522h1v1h-1zM311 502h1v1h-1zM311 483h1v1h-1zM311 463h1v1h-1zM311 443h1v1h-1zM311 423h1v1h-1zM311 403h1v1h-1zM311 384h1v1h-1zM311 364h1v1h-1zM311 344h1v1h-1zM311 324h1v1h-1zM311 304h1v1h-1zM311 284h1v1h-1zM311 265h1v1h-1zM311 245h1v1h-1zM311 225h1v1h-1zM311 205h1v1h-1zM311 185h1v1h-1zM311 166h1v1h-1zM331 720h1v1h-1zM331 701h1v1h-1zM331 681h1v1h-1zM331 661h1v1h-1zM331 641h1v1h-1zM331 621h1v1h-1zM331 602h1v1h-1zM331 582h1v1h-1zM331 562h1v1h-1zM331 542h1v1h-1zM331 522h1v1h-1zM331 502h1v1h-1zM331 483h1v1h-1zM331 463h1v1h-1zM331 443h1v1h-1zM331 423h1v1h-1zM331 403h1v1h-1zM331 384h1v1h-1zM331 364h1v1h-1zM331 344h1v1h-1zM331 324h1v1h-1zM331 304h1v1h-1zM331 284h1v1h-1zM331 265h1v1h-1zM331 245h1v1h-1zM331 225h1v1h-1zM331 205h1v1h-1zM331 185h1v1h-1zM331 166h1v1h-1zM350 720h1v1h-1zM350 701h1v1h-1zM350 681h1v1h-1zM350 661h1v1h-1zM350 641h1v1h-1zM350 621h1v1h-1zM350 602h1v1h-1zM350 582h1v1h-1zM350 562h1v1h-1zM350 542h1v1h-1zM350 522h1v1h-1zM350 502h1v1h-1zM350 483h1v1h-1zM350 463h1v1h-1zM350 443h1v1h-1zM350 423h1v1h-1zM350 403h1v1h-1zM350 384h1v1h-1zM350 364h1v1h-1zM350 344h1v1h-1zM350 324h1v1h-1zM350 304h1v1h-1zM350 284h1v1h-1zM350 265h1v1h-1zM350 245h1v1h-1zM350 225h1v1h-1zM350 205h1v1h-1zM350 185h1v1h-1zM350 166h1v1h-1zM370 720h1v1h-1zM370 701h1v1h-1zM370 681h1v1h-1zM370 661h1v1h-1zM370 641h1v1h-1zM370 621h1v1h-1zM370 602h1v1h-1zM370 582h1v1h-1zM370 562h1v1h-1zM370 542h1v1h-1zM370 522h1v1h-1zM370 502h1v1h-1zM370 483h1v1h-1zM370 463h1v1h-1zM370 443h1v1h-1zM370 423h1v1h-1zM370 403h1v1h-1zM370 384h1v1h-1zM370 364h1v1h-1zM370 344h1v1h-1zM370 324h1v1h-1zM370 304h1v1h-1zM370 284h1v1h-1zM370 265h1v1h-1zM370 245h1v1h-1zM370 225h1v1h-1zM370 205h1v1h-1zM370 185h1v1h-1zM370 166h1v1h-1zM390 720h1v1h-1zM390 701h1v1h-1zM390 681h1v1h-1zM390 661h1v1h-1zM390 641h1v1h-1zM390 621h1v1h-1zM390 602h1v1h-1zM390 582h1v1h-1zM390 562h1v1h-1zM390 542h1v1h-1zM390 522h1v1h-1zM390 502h1v1h-1zM390 483h1v1h-1zM390 463h1v1h-1zM390 443h1v1h-1zM390 423h1v1h-1zM390 403h1v1h-1zM390 384h1v1h-1zM390 364h1v1h-1zM390 344h1v1h-1zM390 324h1v1h-1zM390 304h1v1h-1zM390 284h1v1h-1zM390 265h1v1h-1zM390 245h1v1h-1zM390 225h1v1h-1zM390 205h1v1h-1zM390 185h1v1h-1zM390 166h1v1h-1zM410 720h1v1h-1zM410 701h1v1h-1zM410 681h1v1h-1zM410 661h1v1h-1zM410 641h1v1h-1zM410 621h1v1h-1zM410 602h1v1h-1zM410 582h1v1h-1zM410 562h1v1h-1zM410 542h1v1h-1zM410 522h1v1h-1zM410 502h1v1h-1zM410 483h1v1h-1zM410 463h1v1h-1zM410 443h1v1h-1zM410 423h1v1h-1zM410 403h1v1h-1zM410 384h1v1h-1zM410 364h1v1h-1zM410 344h1v1h-1zM410 324h1v1h-1zM410 304h1v1h-1zM410 284h1v1h-1zM410 265h1v1h-1zM410 245h1v1h-1zM410 225h1v1h-1zM410 205h1v1h-1zM410 185h1v1h-1zM410 166h1v1h-1zM430 720h1v1h-1zM430 701h1v1h-1zM430 681h1v1h-1zM430 661h1v1h-1zM430 641h1v1h-1zM430 621h1v1h-1zM430 602h1v1h-1zM430 582h1v1h-1zM430 562h1v1h-1zM430 542h1v1h-1zM430 522h1v1h-1zM430 502h1v1h-1zM430 483h1v1h-1zM430 463h1v1h-1zM430 443h1v1h-1zM430 423h1v1h-1zM430 403h1v1h-1zM430 384h1v1h-1zM430 364h1v1h-1zM430 344h1v1h-1zM430 324h1v1h-1zM430 304h1v1h-1zM430 284h1v1h-1zM430 265h1v1h-1zM430 245h1v1h-1zM430 225h1v1h-1zM430 205h1v1h-1zM430 185h1v1h-1zM430 166h1v1h-1zM449 720h1v1h-1zM449 701h1v1h-1zM449 681h1v1h-1zM449 661h1v1h-1zM449 641h1v1h-1zM449 621h1v1h-1zM449 602h1v1h-1zM449 582h1v1h-1zM449 562h1v1h-1zM449 542h1v1h-1zM449 522h1v1h-1zM449 502h1v1h-1zM449 483h1v1h-1zM449 463h1v1h-1zM449 443h1v1h-1zM449 423h1v1h-1zM449 403h1v1h-1zM449 384h1v1h-1zM449 364h1v1h-1zM449 344h1v1h-1zM449 324h1v1h-1zM449 304h1v1h-1zM449 284h1v1h-1zM449 265h1v1h-1zM449 245h1v1h-1zM449 225h1v1h-1zM449 205h1v1h-1zM449 185h1v1h-1zM449 166h1v1h-1zM469 720h1v1h-1zM469 701h1v1h-1zM469 681h1v1h-1zM469 661h1v1h-1zM469 641h1v1h-1zM469 621h1v1h-1zM469 602h1v1h-1zM469 582h1v1h-1zM469 562h1v1h-1zM469 542h1v1h-1zM469 522h1v1h-1zM469 502h1v1h-1zM469 483h1v1h-1zM469 463h1v1h-1zM469 443h1v1h-1zM469 423h1v1h-1zM469 403h1v1h-1zM469 384h1v1h-1zM469 364h1v1h-1zM469 344h1v1h-1zM469 324h1v1h-1zM469 304h1v1h-1zM469 284h1v1h-1zM469 265h1v1h-1zM469 245h1v1h-1zM469 225h1v1h-1zM469 205h1v1h-1zM469 185h1v1h-1zM469 166h1v1h-1zM489 720h1v1h-1zM489 701h1v1h-1zM489 681h1v1h-1zM489 661h1v1h-1zM489 641h1v1h-1zM489 621h1v1h-1zM489 602h1v1h-1zM489 582h1v1h-1zM489 562h1v1h-1zM489 542h1v1h-1zM489 522h1v1h-1zM489 502h1v1h-1zM489 483h1v1h-1zM489 463h1v1h-1zM489 443h1v1h-1zM489 423h1v1h-1zM489 403h1v1h-1zM489 384h1v1h-1zM489 364h1v1h-1zM489 344h1v1h-1zM489 324h1v1h-1zM489 304h1v1h-1zM489 284h1v1h-1zM489 265h1v1h-1zM489 245h1v1h-1zM489 225h1v1h-1zM489 205h1v1h-1zM489 185h1v1h-1zM489 166h1v1h-1zM509 720h1v1h-1zM509 701h1v1h-1zM509 681h1v1h-1zM509 661h1v1h-1zM509 641h1v1h-1zM509 621h1v1h-1zM509 602h1v1h-1zM509 582h1v1h-1zM509 562h1v1h-1zM509 542h1v1h-1zM509 522h1v1h-1zM509 502h1v1h-1zM509 483h1v1h-1zM509 463h1v1h-1zM509 443h1v1h-1zM509 423h1v1h-1zM509 403h1v1h-1zM509 384h1v1h-1zM509 364h1v1h-1zM509 344h1v1h-1zM509 324h1v1h-1zM509 304h1v1h-1zM509 284h1v1h-1zM509 265h1v1h-1zM509 245h1v1h-1zM509 225h1v1h-1zM509 205h1v1h-1zM509 185h1v1h-1zM509 166h1v1h-1zM529 720h1v1h-1zM529 701h1v1h-1zM529 681h1v1h-1zM529 661h1v1h-1zM529 641h1v1h-1zM529 621h1v1h-1zM529 602h1v1h-1zM529 582h1v1h-1zM529 562h1v1h-1zM529 542h1v1h-1zM529 522h1v1h-1zM529 502h1v1h-1zM529 483h1v1h-1zM529 463h1v1h-1zM529 443h1v1h-1zM529 423h1v1h-1zM529 403h1v1h-1zM529 384h1v1h-1zM529 364h1v1h-1zM529 344h1v1h-1zM529 324h1v1h-1zM529 304h1v1h-1zM529 284h1v1h-1zM529 265h1v1h-1zM529 245h1v1h-1zM529 225h1v1h-1zM529 205h1v1h-1zM529 185h1v1h-1zM529 166h1v1h-1zM549 720h1v1h-1zM549 701h1v1h-1zM549 681h1v1h-1zM549 661h1v1h-1zM549 641h1v1h-1zM549 621h1v1h-1zM549 602h1v1h-1zM549 582h1v1h-1zM549 562h1v1h-1zM549 542h1v1h-1zM549 522h1v1h-1zM549 502h1v1h-1zM549 483h1v1h-1zM549 463h1v1h-1zM549 443h1v1h-1zM549 423h1v1h-1zM549 403h1v1h-1zM549 384h1v1h-1zM549 364h1v1h-1zM549 344h1v1h-1zM549 324h1v1h-1zM549 304h1v1h-1zM549 284h1v1h-1zM549 265h1v1h-1zM549 245h1v1h-1zM549 225h1v1h-1zM549 205h1v1h-1zM549 185h1v1h-1zM549 166h1v1h-1zM568 720h1v1h-1zM568 701h1v1h-1zM568 681h1v1h-1zM568 661h1v1h-1zM568 641h1v1h-1zM568 621h1v1h-1zM568 602h1v1h-1zM568 582h1v1h-1zM568 562h1v1h-1zM568 542h1v1h-1zM568 522h1v1h-1zM568 502h1v1h-1zM568 483h1v1h-1zM568 463h1v1h-1zM568 443h1v1h-1zM568 423h1v1h-1zM568 403h1v1h-1zM568 384h1v1h-1zM568 364h1v1h-1zM568 344h1v1h-1zM568 324h1v1h-1zM568 304h1v1h-1zM568 284h1v1h-1zM568 265h1v1h-1zM568 245h1v1h-1zM568 225h1v1h-1zM568 205h1v1h-1zM568 185h1v1h-1zM568 166h1v1h-1zM588 720h1v1h-1zM588 701h1v1h-1zM588 681h1v1h-1zM588 661h1v1h-1zM588 641h1v1h-1zM588 621h1v1h-1zM588 602h1v1h-1zM588 582h1v1h-1zM588 562h1v1h-1zM588 542h1v1h-1zM588 522h1v1h-1zM588 502h1v1h-1zM588 483h1v1h-1zM588 463h1v1h-1zM588 443h1v1h-1zM588 423h1v1h-1zM588 403h1v1h-1zM588 384h1v1h-1zM588 364h1v1h-1zM588 344h1v1h-1zM588 324h1v1h-1zM588 304h1v1h-1zM588 284h1v1h-1zM588 265h1v1h-1zM588 245h1v1h-1zM588 225h1v1h-1zM588 205h1v1h-1zM588 185h1v1h-1zM588 166h1v1h-1zM608 720h1v1h-1zM608 701h1v1h-1zM608 681h1v1h-1zM608 661h1v1h-1zM608 641h1v1h-1zM608 621h1v1h-1zM608 602h1v1h-1zM608 582h1v1h-1zM608 562h1v1h-1zM608 542h1v1h-1zM608 522h1v1h-1zM608 502h1v1h-1zM608 483h1v1h-1zM608 463h1v1h-1zM608 443h1v1h-1zM608 423h1v1h-1zM608 403h1v1h-1zM608 384h1v1h-1zM608 364h1v1h-1zM608 344h1v1h-1zM608 324h1v1h-1zM608 304h1v1h-1zM608 284h1v1h-1zM608 265h1v1h-1zM608 245h1v1h-1zM608 225h1v1h-1zM608 205h1v1h-1zM608 185h1v1h-1zM608 166h1v1h-1zM628 720h1v1h-1zM628 701h1v1h-1zM628 681h1v1h-1zM628 661h1v1h-1zM628 641h1v1h-1zM628 621h1v1h-1zM628 602h1v1h-1zM628 582h1v1h-1zM628 562h1v1h-1zM628 542h1v1h-1zM628 522h1v1h-1zM628 502h1v1h-1zM628 483h1v1h-1zM628 463h1v1h-1zM628 443h1v1h-1zM628 423h1v1h-1zM628 403h1v1h-1zM628 384h1v1h-1zM628 364h1v1h-1zM628 344h1v1h-1zM628 324h1v1h-1zM628 304h1v1h-1zM628 284h1v1h-1zM628 265h1v1h-1zM628 245h1v1h-1zM628 225h1v1h-1zM628 205h1v1h-1zM628 185h1v1h-1zM628 166h1v1h-1zM648 720h1v1h-1zM648 701h1v1h-1zM648 681h1v1h-1zM648 661h1v1h-1zM648 641h1v1h-1zM648 621h1v1h-1zM648 602h1v1h-1zM648 582h1v1h-1zM648 562h1v1h-1zM648 542h1v1h-1zM648 522h1v1h-1zM648 502h1v1h-1zM648 483h1v1h-1zM648 463h1v1h-1zM648 443h1v1h-1zM648 423h1v1h-1zM648 403h1v1h-1zM648 384h1v1h-1zM648 364h1v1h-1zM648 344h1v1h-1zM648 324h1v1h-1zM648 304h1v1h-1zM648 284h1v1h-1zM648 265h1v1h-1zM648 245h1v1h-1zM648 225h1v1h-1zM648 205h1v1h-1zM648 185h1v1h-1zM648 166h1v1h-1zM667 720h1v1h-1zM667 701h1v1h-1zM667 681h1v1h-1zM667 661h1v1h-1zM667 641h1v1h-1zM667 621h1v1h-1zM667 602h1v1h-1zM667 582h1v1h-1zM667 562h1v1h-1zM667 542h1v1h-1zM667 522h1v1h-1zM667 502h1v1h-1zM667 483h1v1h-1zM667 463h1v1h-1zM667 443h1v1h-1zM667 423h1v1h-1zM667 403h1v1h-1zM667 384h1v1h-1zM667 364h1v1h-1zM667 344h1v1h-1zM667 324h1v1h-1zM667 304h1v1h-1zM667 284h1v1h-1zM667 265h1v1h-1zM667 245h1v1h-1zM667 225h1v1h-1zM667 205h1v1h-1zM667 185h1v1h-1zM667 166h1v1h-1zM687 720h1v1h-1zM687 701h1v1h-1zM687 681h1v1h-1zM687 661h1v1h-1zM687 641h1v1h-1zM687 621h1v1h-1zM687 602h1v1h-1zM687 582h1v1h-1zM687 562h1v1h-1zM687 542h1v1h-1zM687 522h1v1h-1zM687 502h1v1h-1zM687 483h1v1h-1zM687 463h1v1h-1zM687 443h1v1h-1zM687 423h1v1h-1zM687 403h1v1h-1zM687 384h1v1h-1zM687 364h1v1h-1zM687 344h1v1h-1zM687 324h1v1h-1zM687 304h1v1h-1zM687 284h1v1h-1zM687 265h1v1h-1zM687 245h1v1h-1zM687 225h1v1h-1zM687 205h1v1h-1zM687 185h1v1h-1zM687 166h1v1h-1zM707 720h1v1h-1zM707 701h1v1h-1zM707 681h1v1h-1zM707 661h1v1h-1zM707 641h1v1h-1zM707 621h1v1h-1zM707 602h1v1h-1zM707 582h1v1h-1zM707 562h1v1h-1zM707 542h1v1h-1zM707 522h1v1h-1zM707 502h1v1h-1zM707 483h1v1h-1zM707 463h1v1h-1zM707 443h1v1h-1zM707 423h1v1h-1zM707 403h1v1h-1zM707 384h1v1h-1zM707 364h1v1h-1zM707 344h1v1h-1zM707 324h1v1h-1zM707 304h1v1h-1zM707 284h1v1h-1zM707 265h1v1h-1zM707 245h1v1h-1zM707 225h1v1h-1zM707 205h1v1h-1zM707 185h1v1h-1zM707 166h1v1h-1zM727 720h1v1h-1zM727 701h1v1h-1zM727 681h1v1h-1zM727 661h1v1h-1zM727 641h1v1h-1zM727 621h1v1h-1zM727 602h1v1h-1zM727 582h1v1h-1zM727 562h1v1h-1zM727 542h1v1h-1zM727 522h1v1h-1zM727 502h1v1h-1zM727 483h1v1h-1zM727 463h1v1h-1zM727 443h1v1h-1zM727 423h1v1h-1zM727 403h1v1h-1zM727 384h1v1h-1zM727 364h1v1h-1zM727 344h1v1h-1zM727 324h1v1h-1zM727 304h1v1h-1zM727 284h1v1h-1zM727 265h1v1h-1zM727 245h1v1h-1zM727 225h1v1h-1zM727 205h1v1h-1zM727 185h1v1h-1zM727 166h1v1h-1zM747 720h1v1h-1zM747 701h1v1h-1zM747 681h1v1h-1zM747 661h1v1h-1zM747 641h1v1h-1zM747 621h1v1h-1zM747 602h1v1h-1zM747 582h1v1h-1zM747 562h1v1h-1zM747 542h1v1h-1zM747 522h1v1h-1zM747 502h1v1h-1zM747 483h1v1h-1zM747 463h1v1h-1zM747 443h1v1h-1zM747 423h1v1h-1zM747 403h1v1h-1zM747 384h1v1h-1zM747 364h1v1h-1zM747 344h1v1h-1zM747 324h1v1h-1zM747 304h1v1h-1zM747 284h1v1h-1zM747 265h1v1h-1zM747 245h1v1h-1zM747 225h1v1h-1zM747 205h1v1h-1zM747 185h1v1h-1zM747 166h1v1h-1zM767 720h1v1h-1zM767 701h1v1h-1zM767 681h1v1h-1zM767 661h1v1h-1zM767 641h1v1h-1zM767 621h1v1h-1zM767 602h1v1h-1zM767 582h1v1h-1zM767 562h1v1h-1zM767 542h1v1h-1zM767 522h1v1h-1zM767 502h1v1h-1zM767 483h1v1h-1zM767 463h1v1h-1zM767 443h1v1h-1zM767 423h1v1h-1zM767 403h1v1h-1zM767 384h1v1h-1zM767 364h1v1h-1zM767 344h1v1h-1zM767 324h1v1h-1zM767 304h1v1h-1zM767 284h1v1h-1zM767 265h1v1h-1zM767 245h1v1h-1zM767 225h1v1h-1zM767 205h1v1h-1zM767 185h1v1h-1zM767 166h1v1h-1zM786 720h1v1h-1zM786 701h1v1h-1zM786 681h1v1h-1zM786 661h1v1h-1zM786 641h1v1h-1zM786 621h1v1h-1zM786 602h1v1h-1zM786 582h1v1h-1zM786 562h1v1h-1zM786 542h1v1h-1zM786 522h1v1h-1zM786 502h1v1h-1zM786 483h1v1h-1zM786 463h1v1h-1zM786 443h1v1h-1zM786 423h1v1h-1zM786 403h1v1h-1zM786 384h1v1h-1zM786 364h1v1h-1zM786 344h1v1h-1zM786 324h1v1h-1zM786 304h1v1h-1zM786 284h1v1h-1zM786 265h1v1h-1zM786 245h1v1h-1zM786 225h1v1h-1zM786 205h1v1h-1zM786 185h1v1h-1zM786 166h1v1h-1zM806 720h1v1h-1zM806 701h1v1h-1zM806 681h1v1h-1zM806 661h1v1h-1zM806 641h1v1h-1zM806 621h1v1h-1zM806 602h1v1h-1zM806 582h1v1h-1zM806 562h1v1h-1zM806 542h1v1h-1zM806 522h1v1h-1zM806 502h1v1h-1zM806 483h1v1h-1zM806 463h1v1h-1zM806 443h1v1h-1zM806 423h1v1h-1zM806 403h1v1h-1zM806 384h1v1h-1zM806 364h1v1h-1zM806 344h1v1h-1zM806 324h1v1h-1zM806 304h1v1h-1zM806 284h1v1h-1zM806 265h1v1h-1zM806 245h1v1h-1zM806 225h1v1h-1zM806 205h1v1h-1zM806 185h1v1h-1zM806 166h1v1h-1zM826 720h1v1h-1zM826 701h1v1h-1zM826 681h1v1h-1zM826 661h1v1h-1zM826 641h1v1h-1zM826 621h1v1h-1zM826 602h1v1h-1zM826 582h1v1h-1zM826 562h1v1h-1zM826 542h1v1h-1zM826 522h1v1h-1zM826 502h1v1h-1zM826 483h1v1h-1zM826 463h1v1h-1zM826 443h1v1h-1zM826 423h1v1h-1zM826 403h1v1h-1zM826 384h1v1h-1zM826 364h1v1h-1zM826 344h1v1h-1zM826 324h1v1h-1zM826 304h1v1h-1zM826 284h1v1h-1zM826 265h1v1h-1zM826 245h1v1h-1zM826 225h1v1h-1zM826 205h1v1h-1zM826 185h1v1h-1zM826 166h1v1h-1zM846 720h1v1h-1zM846 701h1v1h-1zM846 681h1v1h-1zM846 661h1v1h-1zM846 641h1v1h-1zM846 621h1v1h-1zM846 602h1v1h-1zM846 582h1v1h-1zM846 562h1v1h-1zM846 542h1v1h-1zM846 522h1v1h-1zM846 502h1v1h-1zM846 483h1v1h-1zM846 463h1v1h-1zM846 443h1v1h-1zM846 423h1v1h-1zM846 403h1v1h-1zM846 384h1v1h-1zM846 364h1v1h-1zM846 344h1v1h-1zM846 324h1v1h-1zM846 304h1v1h-1zM846 284h1v1h-1zM846 265h1v1h-1zM846 245h1v1h-1zM846 225h1v1h-1zM846 205h1v1h-1zM846 185h1v1h-1zM846 166h1v1h-1zM866 720h1v1h-1zM866 701h1v1h-1zM866 681h1v1h-1zM866 661h1v1h-1zM866 641h1v1h-1zM866 621h1v1h-1zM866 602h1v1h-1zM866 582h1v1h-1zM866 562h1v1h-1zM866 542h1v1h-1zM866 522h1v1h-1zM866 502h1v1h-1zM866 483h1v1h-1zM866 463h1v1h-1zM866 443h1v1h-1zM866 423h1v1h-1zM866 403h1v1h-1zM866 384h1v1h-1zM866 364h1v1h-1zM866 344h1v1h-1zM866 324h1v1h-1zM866 304h1v1h-1zM866 284h1v1h-1zM866 265h1v1h-1zM866 245h1v1h-1zM866 225h1v1h-1zM866 205h1v1h-1zM866 185h1v1h-1zM866 166h1v1h-1zM885 720h1v1h-1zM885 701h1v1h-1zM885 681h1v1h-1zM885 661h1v1h-1zM885 641h1v1h-1zM885 621h1v1h-1zM885 602h1v1h-1zM885 582h1v1h-1zM885 562h1v1h-1zM885 542h1v1h-1zM885 522h1v1h-1zM885 502h1v1h-1zM885 483h1v1h-1zM885 463h1v1h-1zM885 443h1v1h-1zM885 423h1v1h-1zM885 403h1v1h-1zM885 384h1v1h-1zM885 364h1v1h-1zM885 344h1v1h-1zM885 324h1v1h-1zM885 304h1v1h-1zM885 284h1v1h-1zM885 265h1v1h-1zM885 245h1v1h-1zM885 225h1v1h-1zM885 205h1v1h-1zM885 185h1v1h-1zM885 166h1v1h-1zM905 720h1v1h-1zM905 701h1v1h-1zM905 681h1v1h-1zM905 661h1v1h-1zM905 641h1v1h-1zM905 621h1v1h-1zM905 602h1v1h-1zM905 582h1v1h-1zM905 562h1v1h-1zM905 542h1v1h-1zM905 522h1v1h-1zM905 502h1v1h-1zM905 483h1v1h-1zM905 463h1v1h-1zM905 443h1v1h-1zM905 423h1v1h-1zM905 403h1v1h-1zM905 384h1v1h-1zM905 364h1v1h-1zM905 344h1v1h-1zM905 324h1v1h-1zM905 304h1v1h-1zM905 284h1v1h-1zM905 265h1v1h-1zM905 245h1v1h-1zM905 225h1v1h-1zM905 205h1v1h-1zM905 185h1v1h-1zM905 166h1v1h-1zM925 720h1v1h-1zM925 701h1v1h-1zM925 681h1v1h-1zM925 661h1v1h-1zM925 641h1v1h-1zM925 621h1v1h-1zM925 602h1v1h-1zM925 582h1v1h-1zM925 562h1v1h-1zM925 542h1v1h-1zM925 522h1v1h-1zM925 502h1v1h-1zM925 483h1v1h-1zM925 463h1v1h-1zM925 443h1v1h-1zM925 423h1v1h-1zM925 403h1v1h-1zM925 384h1v1h-1zM925 364h1v1h-1zM925 344h1v1h-1zM925 324h1v1h-1zM925 304h1v1h-1zM925 284h1v1h-1zM925 265h1v1h-1zM925 245h1v1h-1zM925 225h1v1h-1zM925 205h1v1h-1zM925 185h1v1h-1zM925 166h1v1h-1zM945 720h1v1h-1zM945 701h1v1h-1zM945 681h1v1h-1zM945 661h1v1h-1zM945 641h1v1h-1zM945 621h1v1h-1zM945 602h1v1h-1zM945 582h1v1h-1zM945 562h1v1h-1zM945 542h1v1h-1zM945 522h1v1h-1zM945 502h1v1h-1zM945 483h1v1h-1zM945 463h1v1h-1zM945 443h1v1h-1zM945 423h1v1h-1zM945 403h1v1h-1zM945 384h1v1h-1zM945 364h1v1h-1zM945 344h1v1h-1zM945 324h1v1h-1zM945 304h1v1h-1zM945 284h1v1h-1zM945 265h1v1h-1zM945 245h1v1h-1zM945 225h1v1h-1zM945 205h1v1h-1zM945 185h1v1h-1zM945 166h1v1h-1zM965 720h1v1h-1zM965 701h1v1h-1zM965 681h1v1h-1zM965 661h1v1h-1zM965 641h1v1h-1zM965 621h1v1h-1zM965 602h1v1h-1zM965 582h1v1h-1zM965 562h1v1h-1zM965 542h1v1h-1zM965 522h1v1h-1zM965 502h1v1h-1zM965 483h1v1h-1zM965 463h1v1h-1zM965 443h1v1h-1zM965 423h1v1h-1zM965 403h1v1h-1zM965 384h1v1h-1zM965 364h1v1h-1zM965 344h1v1h-1zM965 324h1v1h-1zM965 304h1v1h-1zM965 284h1v1h-1zM965 265h1v1h-1zM965 245h1v1h-1zM965 225h1v1h-1zM965 205h1v1h-1zM965 185h1v1h-1zM965 166h1v1h-1zM985 720h1v1h-1zM985 701h1v1h-1zM985 681h1v1h-1zM985 661h1v1h-1zM985 641h1v1h-1zM985 621h1v1h-1zM985 602h1v1h-1zM985 582h1v1h-1zM985 562h1v1h-1zM985 542h1v1h-1zM985 522h1v1h-1zM985 502h1v1h-1zM985 483h1v1h-1zM985 463h1v1h-1zM985 443h1v1h-1zM985 423h1v1h-1zM985 403h1v1h-1zM985 384h1v1h-1zM985 364h1v1h-1zM985 344h1v1h-1zM985 324h1v1h-1zM985 304h1v1h-1zM985 284h1v1h-1zM985 265h1v1h-1zM985 245h1v1h-1zM985 225h1v1h-1zM985 205h1v1h-1zM985 185h1v1h-1zM985 166h1v1h-1zM1004 720h1v1h-1zM1004 701h1v1h-1zM1004 681h1v1h-1zM1004 661h1v1h-1zM1004 641h1v1h-1zM1004 621h1v1h-1zM1004 602h1v1h-1zM1004 582h1v1h-1zM1004 562h1v1h-1zM1004 542h1v1h-1zM1004 522h1v1h-1zM1004 502h1v1h-1zM1004 483h1v1h-1zM1004 463h1v1h-1zM1004 443h1v1h-1zM1004 423h1v1h-1zM1004 403h1v1h-1zM1004 384h1v1h-1zM1004 364h1v1h-1zM1004 344h1v1h-1zM1004 324h1v1h-1zM1004 304h1v1h-1zM1004 284h1v1h-1zM1004 265h1v1h-1zM1004 245h1v1h-1zM1004 225h1v1h-1zM1004 205h1v1h-1zM1004 185h1v1h-1zM1004 166h1v1h-1zM1024 720h1v1h-1zM1024 701h1v1h-1zM1024 681h1v1h-1zM1024 661h1v1h-1zM1024 641h1v1h-1zM1024 621h1v1h-1zM1024 602h1v1h-1zM1024 582h1v1h-1zM1024 562h1v1h-1zM1024 542h1v1h-1zM1024 522h1v1h-1zM1024 502h1v1h-1zM1024 483h1v1h-1zM1024 463h1v1h-1zM1024 443h1v1h-1zM1024 423h1v1h-1zM1024 403h1v1h-1zM1024 384h1v1h-1zM1024 364h1v1h-1zM1024 344h1v1h-1zM1024 324h1v1h-1zM1024 304h1v1h-1zM1024 284h1v1h-1zM1024 265h1v1h-1zM1024 245h1v1h-1zM1024 225h1v1h-1zM1024 205h1v1h-1zM1024 185h1v1h-1zM1024 166h1v1h-1zM1044 720h1v1h-1zM1044 701h1v1h-1zM1044 681h1v1h-1zM1044 661h1v1h-1zM1044 641h1v1h-1zM1044 621h1v1h-1zM1044 602h1v1h-1zM1044 582h1v1h-1zM1044 562h1v1h-1zM1044 542h1v1h-1zM1044 522h1v1h-1zM1044 502h1v1h-1zM1044 483h1v1h-1zM1044 463h1v1h-1zM1044 443h1v1h-1zM1044 423h1v1h-1zM1044 403h1v1h-1zM1044 384h1v1h-1zM1044 364h1v1h-1zM1044 344h1v1h-1zM1044 324h1v1h-1zM1044 304h1v1h-1zM1044 284h1v1h-1zM1044 265h1v1h-1zM1044 245h1v1h-1zM1044 225h1v1h-1zM1044 205h1v1h-1zM1044 185h1v1h-1zM1044 166h1v1h-1zM1064 720h1v1h-1zM1064 701h1v1h-1zM1064 681h1v1h-1zM1064 661h1v1h-1zM1064 641h1v1h-1zM1064 621h1v1h-1zM1064 602h1v1h-1zM1064 582h1v1h-1zM1064 562h1v1h-1zM1064 542h1v1h-1zM1064 522h1v1h-1zM1064 502h1v1h-1zM1064 483h1v1h-1zM1064 463h1v1h-1zM1064 443h1v1h-1zM1064 423h1v1h-1zM1064 403h1v1h-1zM1064 384h1v1h-1zM1064 364h1v1h-1zM1064 344h1v1h-1zM1064 324h1v1h-1zM1064 304h1v1h-1zM1064 284h1v1h-1zM1064 265h1v1h-1zM1064 245h1v1h-1zM1064 225h1v1h-1zM1064 205h1v1h-1zM1064 185h1v1h-1zM1064 166h1v1h-1zM1084 720h1v1h-1zM1084 701h1v1h-1zM1084 681h1v1h-1zM1084 661h1v1h-1zM1084 641h1v1h-1zM1084 621h1v1h-1zM1084 602h1v1h-1zM1084 582h1v1h-1zM1084 562h1v1h-1zM1084 542h1v1h-1zM1084 522h1v1h-1zM1084 502h1v1h-1zM1084 483h1v1h-1zM1084 463h1v1h-1zM1084 443h1v1h-1zM1084 423h1v1h-1zM1084 403h1v1h-1zM1084 384h1v1h-1zM1084 364h1v1h-1zM1084 344h1v1h-1zM1084 324h1v1h-1zM1084 304h1v1h-1zM1084 284h1v1h-1zM1084 265h1v1h-1zM1084 245h1v1h-1zM1084 225h1v1h-1zM1084 205h1v1h-1zM1084 185h1v1h-1zM1084 166h1v1h-1zM1103 720h1v1h-1zM1103 701h1v1h-1zM1103 681h1v1h-1zM1103 661h1v1h-1zM1103 641h1v1h-1zM1103 621h1v1h-1zM1103 602h1v1h-1zM1103 582h1v1h-1zM1103 562h1v1h-1zM1103 542h1v1h-1zM1103 522h1v1h-1zM1103 502h1v1h-1zM1103 483h1v1h-1zM1103 463h1v1h-1zM1103 443h1v1h-1zM1103 423h1v1h-1zM1103 403h1v1h-1zM1103 384h1v1h-1zM1103 364h1v1h-1zM1103 344h1v1h-1zM1103 324h1v1h-1zM1103 304h1v1h-1zM1103 284h1v1h-1zM1103 265h1v1h-1zM1103 245h1v1h-1zM1103 225h1v1h-1zM1103 205h1v1h-1zM1103 185h1v1h-1zM1103 166h1v1h-1zM1123 720h1v1h-1zM1123 701h1v1h-1zM1123 681h1v1h-1zM1123 661h1v1h-1zM1123 641h1v1h-1zM1123 621h1v1h-1zM1123 602h1v1h-1zM1123 582h1v1h-1zM1123 562h1v1h-1zM1123 542h1v1h-1zM1123 522h1v1h-1zM1123 502h1v1h-1zM1123 483h1v1h-1zM1123 463h1v1h-1zM1123 443h1v1h-1zM1123 423h1v1h-1zM1123 403h1v1h-1zM1123 384h1v1h-1zM1123 364h1v1h-1zM1123 344h1v1h-1zM1123 324h1v1h-1zM1123 304h1v1h-1zM1123 284h1v1h-1zM1123 265h1v1h-1zM1123 245h1v1h-1zM1123 225h1v1h-1zM1123 205h1v1h-1zM1123 185h1v1h-1zM1123 166h1v1h-1z" fill="#ffffff" fill-opacity="0.3"/>
<path d="M515.8 140V369.9H1036V140" fill="none" stroke="#7b7bff" stroke-width="2.6"/>
<rect x="254.60" y="255.30" width="549.00" height="376.00" fill="none" stroke="#444" stroke-width="1"/><g font-family="Liberation Sans"><rect x="466.60" y="560.40" width="337.00" height="70.90" fill="none" stroke="#3a3a3a" stroke-width="1"/><line x1="466.60" y1="572.40" x2="803.60" y2="572.40" stroke="#3a3a3a" stroke-width="1" /><line x1="466.60" y1="592.20" x2="803.60" y2="592.20" stroke="#3a3a3a" stroke-width="1" /><line x1="615.40" y1="611.40" x2="803.60" y2="611.40" stroke="#3a3a3a" stroke-width="1" /><line x1="496.40" y1="560.40" x2="496.40" y2="572.40" stroke="#3a3a3a" stroke-width="1" /><line x1="530.20" y1="560.40" x2="530.20" y2="572.40" stroke="#3a3a3a" stroke-width="1" /><line x1="704.20" y1="560.40" x2="704.20" y2="572.40" stroke="#3a3a3a" stroke-width="1" /><line x1="530.20" y1="572.40" x2="530.20" y2="592.20" stroke="#3a3a3a" stroke-width="1" /><line x1="579.40" y1="572.40" x2="579.40" y2="592.20" stroke="#3a3a3a" stroke-width="1" /><line x1="654.50" y1="572.40" x2="654.50" y2="592.20" stroke="#3a3a3a" stroke-width="1" /><line x1="704.20" y1="572.40" x2="704.20" y2="592.20" stroke="#3a3a3a" stroke-width="1" /><line x1="763.50" y1="572.40" x2="763.50" y2="592.20" stroke="#3a3a3a" stroke-width="1" /><line x1="615.40" y1="592.20" x2="615.40" y2="631.30" stroke="#3a3a3a" stroke-width="1" /><line x1="734.40" y1="611.40" x2="734.40" y2="631.30" stroke="#3a3a3a" stroke-width="1" /><line x1="763.50" y1="611.40" x2="763.50" y2="631.30" stroke="#3a3a3a" stroke-width="1" /><text x="470.20" y="568.30" font-size="5" fill="#000" text-anchor="start" stroke="#000" stroke-width="0.14" textLength="17" lengthAdjust="spacingAndGlyphs">Item ref</text><text x="499.40" y="568.30" font-size="5" fill="#000" text-anchor="start" stroke="#000" stroke-width="0.14" textLength="18" lengthAdjust="spacingAndGlyphs">Quantity</text><text x="533.20" y="568.30" font-size="5" fill="#000" text-anchor="start" stroke="#000" stroke-width="0.14" textLength="104.4" lengthAdjust="spacingAndGlyphs">Title/Name, destination, material, dimension etc</text><text x="708.00" y="568.30" font-size="5" fill="#000" text-anchor="start" stroke="#000" stroke-width="0.14" textLength="47.3" lengthAdjust="spacingAndGlyphs">Article No./Reference</text><text x="470.00" y="579.00" font-size="5" fill="#000" text-anchor="start" stroke="#000" stroke-width="0.14" textLength="27.5" lengthAdjust="spacingAndGlyphs">Designed by</text><text x="533.00" y="579.00" font-size="5" fill="#000" text-anchor="start" stroke="#000" stroke-width="0.14" textLength="26" lengthAdjust="spacingAndGlyphs">Checked by</text><text x="592.00" y="579.00" font-size="5" fill="#000" text-anchor="start" stroke="#000" stroke-width="0.14" textLength="42" lengthAdjust="spacingAndGlyphs">Approved by - date</text><text x="660.80" y="579.00" font-size="5" fill="#000" text-anchor="start" stroke="#000" stroke-width="0.14" textLength="20.2" lengthAdjust="spacingAndGlyphs">Filename</text><text x="663.00" y="588.20" font-size="5" fill="#000" text-anchor="start" stroke="#000" stroke-width="0.14" textLength="35.3" lengthAdjust="spacingAndGlyphs">part_05.12.dxf</text><text x="707.40" y="579.00" font-size="5" fill="#000" text-anchor="start" stroke="#000" stroke-width="0.14" textLength="10" lengthAdjust="spacingAndGlyphs">Date</text><text x="767.60" y="579.00" font-size="5" fill="#000" text-anchor="start" stroke="#000" stroke-width="0.14" textLength="12.2" lengthAdjust="spacingAndGlyphs">Scale</text><text x="737.80" y="619.00" font-size="5" fill="#000" text-anchor="start" stroke="#000" stroke-width="0.14" textLength="15" lengthAdjust="spacingAndGlyphs">Edition</text><text x="768.80" y="619.00" font-size="5" fill="#000" text-anchor="start" stroke="#000" stroke-width="0.14" textLength="12.8" lengthAdjust="spacingAndGlyphs">Sheet</text><text x="716.90" y="588.30" font-size="8.6" fill="#111" text-anchor="start" textLength="40.5" lengthAdjust="spacingAndGlyphs">01/01/2024</text><text x="787.80" y="588.30" font-size="8.6" fill="#111" text-anchor="start" textLength="10.8" lengthAdjust="spacingAndGlyphs">1:1</text><text x="621.50" y="608.10" font-size="13.7" fill="#111" text-anchor="start" textLength="55.5" lengthAdjust="spacingAndGlyphs">Part 5.12</text><circle cx="496.6" cy="610.4" r="8.9" fill="#e8e8e8" stroke="#0a0a0a" stroke-width="4.6"/><path d="M492 613.5L497 604M495.5 612.5L500 605.5M489 612H497" stroke="#555" stroke-width="0.6" fill="none"/><path d="M490 613.8L496 613.5L499.5 606" stroke="#e03030" stroke-width="0.6" fill="none"/><path d="M498.5 612L507.5 620.5" stroke="#111" stroke-width="3.6"/><path d="M498.5 612L506 619" stroke="#bbb" stroke-width="1.6" stroke-dasharray="1 0.8"/><text x="518.80" y="614.40" font-size="19.2" fill="#1e1e1e" text-anchor="start" textLength="47.4" lengthAdjust="spacingAndGlyphs" font-weight="normal">QCAD</text><text x="566.40" y="614.40" font-size="19.2" fill="#5b6ca0" text-anchor="start" textLength="30.4" lengthAdjust="spacingAndGlyphs">.org</text><text x="532.00" y="622.80" font-size="7.4" fill="#7c8ec4" text-anchor="start" textLength="54" lengthAdjust="spacingAndGlyphs">Open Source CAD</text></g><g font-family="Liberation Sans"><path d="M529.3 326.5H538.8Q546.7 330.2 554.5 326.5H564.5V362.4H554.5Q546.7 358.7 538.8 362.4H529.3Z" fill="none" stroke="#3a3a3a" stroke-width="1"/><line x1="530.80" y1="327.00" x2="530.80" y2="362.00" stroke="#999" stroke-width="1.2" /><line x1="538.80" y1="327.50" x2="538.80" y2="361.50" stroke="#444" stroke-width="0.9" stroke-dasharray="3 1.8"/><line x1="554.50" y1="327.50" x2="554.50" y2="361.50" stroke="#444" stroke-width="0.9" stroke-dasharray="3 1.8"/><rect x="564.50" y="334.30" width="22.20" height="20.20" fill="none" stroke="#3a3a3a" stroke-width="1"/><rect x="586.70" y="335.40" width="19.50" height="18.20" fill="none" stroke="#3a3a3a" stroke-width="1"/><path d="M606.2 334.3H627.1L628.6 336V352.8L627.1 354.5H606.2" fill="none" stroke="#3a3a3a" stroke-width="1"/><line x1="627.10" y1="334.30" x2="627.10" y2="354.50" stroke="#777" stroke-width="0.8" /><line x1="508.50" y1="344.50" x2="633.00" y2="344.50" stroke="#f45c5c" stroke-width="0.9" stroke-dasharray="5 1.5 1 1.5"/><line x1="529.10" y1="324.50" x2="529.10" y2="365.00" stroke="#ff7070" stroke-width="1" /><circle cx="529.3" cy="344.5" r="5" fill="none" stroke="#ff4040" stroke-width="0.9"/><line x1="546.70" y1="322.00" x2="546.70" y2="367.00" stroke="#f45c5c" stroke-width="0.9" stroke-dasharray="5 1.5 1 1.5"/><line x1="538.80" y1="312.00" x2="538.80" y2="326.00" stroke="#2a9aff" stroke-width="0.7" /><line x1="554.50" y1="312.00" x2="554.50" y2="326.00" stroke="#2a9aff" stroke-width="0.7" /><line x1="538.80" y1="314.00" x2="554.50" y2="314.00" stroke="#2a9aff" stroke-width="0.8" /><path d="M538.80 314.00L542.00 312.90L542.00 315.10Z" fill="#2a9aff"/><path d="M554.50 314.00L551.30 315.10L551.30 312.90Z" fill="#2a9aff"/><text x="546.65" y="312.30" font-size="5.2" fill="#2a9aff" text-anchor="middle" >Ø8</text><line x1="546.70" y1="367.00" x2="546.70" y2="385.50" stroke="#2a9aff" stroke-width="0.7" /><line x1="628.50" y1="355.00" x2="628.50" y2="385.50" stroke="#2a9aff" stroke-width="0.7" /><line x1="546.70" y1="383.90" x2="628.50" y2="383.90" stroke="#2a9aff" stroke-width="0.8" /><path d="M546.70 383.90L549.90 382.80L549.90 385.00Z" fill="#2a9aff"/><path d="M628.50 383.90L625.30 385.00L625.30 382.80Z" fill="#2a9aff"/><text x="587.60" y="382.20" font-size="5.2" fill="#2a9aff" text-anchor="middle" >41</text></g><g font-family="Liberation Sans"><rect x="528.30" y="405.40" width="36.30" height="36.10" fill="none" stroke="#3a3a3a" stroke-width="1"/><rect x="528.3" y="405.9" width="3" height="35.2" fill="#8a8a8a"/><circle cx="546.7" cy="423.3" r="7.9" fill="none" stroke="#3a3a3a" stroke-width="1"/><rect x="564.60" y="413.40" width="22.10" height="20.10" fill="none" stroke="#3a3a3a" stroke-width="1"/><rect x="586.70" y="414.30" width="19.60" height="18.10" fill="none" stroke="#3a3a3a" stroke-width="1"/><path d="M606.3 413.4H626.4L628.1 415.3V431.6L626.4 433.5H606.3" fill="none" stroke="#3a3a3a" stroke-width="1"/><line x1="626.40" y1="413.40" x2="626.40" y2="433.50" stroke="#777" stroke-width="0.8" /><line x1="524.40" y1="423.30" x2="632.60" y2="423.30" stroke="#f45c5c" stroke-width="0.9" stroke-dasharray="5 1.5 1 1.5"/><line x1="546.70" y1="401.00" x2="546.70" y2="446.50" stroke="#f45c5c" stroke-width="0.9" stroke-dasharray="5 1.5 1 1.5"/><line x1="517.00" y1="405.40" x2="528.30" y2="405.40" stroke="#2a9aff" stroke-width="0.7" /><line x1="517.00" y1="441.50" x2="528.30" y2="441.50" stroke="#2a9aff" stroke-width="0.7" /><line x1="518.70" y1="405.40" x2="518.70" y2="441.50" stroke="#2a9aff" stroke-width="0.8" /><path d="M518.70 405.40L519.80 408.60L517.60 408.60Z" fill="#2a9aff"/><path d="M518.70 441.50L517.60 438.30L519.80 438.30Z" fill="#2a9aff"/><text x="0" y="0" font-size="5.2" fill="#2a9aff" text-anchor="middle" transform="translate(517.20 423.45) rotate(-90)">18</text><line x1="598.60" y1="414.30" x2="598.60" y2="432.40" stroke="#2a9aff" stroke-width="0.8" /><path d="M598.60 414.30L599.70 417.50L597.50 417.50Z" fill="#2a9aff"/><path d="M598.60 432.40L597.50 429.20L599.70 429.20Z" fill="#2a9aff"/><text x="0" y="0" font-size="5.2" fill="#2a9aff" text-anchor="middle" transform="translate(597.10 423.35) rotate(-90)">Ø8</text><line x1="628.40" y1="413.40" x2="660.00" y2="413.40" stroke="#2a9aff" stroke-width="0.7" /><line x1="628.40" y1="433.50" x2="660.00" y2="433.50" stroke="#2a9aff" stroke-width="0.7" /><line x1="658.00" y1="413.40" x2="658.00" y2="433.50" stroke="#2a9aff" stroke-width="0.8" /><path d="M658.00 413.40L659.10 416.60L656.90 416.60Z" fill="#2a9aff"/><path d="M658.00 433.50L656.90 430.30L659.10 430.30Z" fill="#2a9aff"/><text x="0" y="0" font-size="5.2" fill="#2a9aff" text-anchor="middle" transform="translate(656.50 423.45) rotate(-90)">Ø10</text><line x1="606.30" y1="434.00" x2="606.30" y2="455.00" stroke="#2a9aff" stroke-width="0.7" /><line x1="586.70" y1="434.00" x2="586.70" y2="465.00" stroke="#2a9aff" stroke-width="0.7" /><line x1="564.60" y1="442.00" x2="564.60" y2="475.00" stroke="#2a9aff" stroke-width="0.7" /><line x1="528.30" y1="442.00" x2="528.30" y2="485.00" stroke="#2a9aff" stroke-width="0.7" /><line x1="628.40" y1="434.00" x2="628.40" y2="485.00" stroke="#2a9aff" stroke-width="0.7" /><line x1="606.30" y1="453.40" x2="628.40" y2="453.40" stroke="#2a9aff" stroke-width="0.8" /><path d="M606.30 453.40L609.50 452.30L609.50 454.50Z" fill="#2a9aff"/><path d="M628.40 453.40L625.20 454.50L625.20 452.30Z" fill="#2a9aff"/><text x="617.35" y="451.90" font-size="5.2" fill="#2a9aff" text-anchor="middle" >11</text><line x1="586.70" y1="463.20" x2="628.40" y2="463.20" stroke="#2a9aff" stroke-width="0.8" /><path d="M586.70 463.20L589.90 462.10L589.90 464.30Z" fill="#2a9aff"/><path d="M628.40 463.20L625.20 464.30L625.20 462.10Z" fill="#2a9aff"/><text x="607.55" y="461.70" font-size="5.2" fill="#2a9aff" text-anchor="middle" >21</text><line x1="564.60" y1="473.20" x2="628.40" y2="473.20" stroke="#2a9aff" stroke-width="0.8" /><path d="M564.60 473.20L567.80 472.10L567.80 474.30Z" fill="#2a9aff"/><path d="M628.40 473.20L625.20 474.30L625.20 472.10Z" fill="#2a9aff"/><text x="596.50" y="471.70" font-size="5.2" fill="#2a9aff" text-anchor="middle" >32</text><line x1="528.30" y1="482.80" x2="628.40" y2="482.80" stroke="#2a9aff" stroke-width="0.8" /><path d="M528.30 482.80L531.50 481.70L531.50 483.90Z" fill="#2a9aff"/><path d="M628.40 482.80L625.20 483.90L625.20 481.70Z" fill="#2a9aff"/><text x="578.35" y="481.30" font-size="5.2" fill="#2a9aff" text-anchor="middle" >50</text><line x1="521.00" y1="453.50" x2="536.00" y2="453.50" stroke="#2a9aff" stroke-width="0.7" /><path d="M528.30 453.50L525.10 454.60L525.10 452.40Z" fill="#2a9aff"/><text x="531.00" y="452.30" font-size="5.2" fill="#2a9aff" text-anchor="start" >1x45°</text><line x1="618.00" y1="443.50" x2="633.00" y2="443.50" stroke="#2a9aff" stroke-width="0.7" /><path d="M628.40 443.50L631.60 442.40L631.60 444.60Z" fill="#2a9aff"/><text x="629.50" y="442.30" font-size="5.2" fill="#2a9aff" text-anchor="start" >1x45°</text><line x1="529.80" y1="442.00" x2="529.80" y2="456.00" stroke="#7fc0ff" stroke-width="1.6" /><line x1="628.40" y1="434.00" x2="628.40" y2="446.00" stroke="#7fc0ff" stroke-width="1.6" /></g><circle cx="449.5" cy="344.3" r="17.9" fill="none" stroke="#3a3a3a" stroke-width="0.9"/><circle cx="449.5" cy="344.3" r="16.4" fill="none" stroke="#3a3a3a" stroke-width="0.9"/><circle cx="449.5" cy="344.3" r="9.7" fill="none" stroke="#333" stroke-width="1.4"/><circle cx="449.5" cy="344.3" r="8.6" fill="none" stroke="#555" stroke-width="0.8" stroke-dasharray="1.5 1"/><line x1="441.30" y1="330.00" x2="441.30" y2="337.00" stroke="#555" stroke-width="0.8" /><line x1="441.30" y1="351.50" x2="441.30" y2="358.50" stroke="#555" stroke-width="0.8" /><line x1="457.70" y1="330.00" x2="457.70" y2="337.00" stroke="#555" stroke-width="0.8" /><line x1="457.70" y1="351.50" x2="457.70" y2="358.50" stroke="#555" stroke-width="0.8" /><line x1="427.50" y1="344.30" x2="471.90" y2="344.30" stroke="#f45c5c" stroke-width="0.9" stroke-dasharray="5 1.5 1 1.5"/><line x1="449.50" y1="322.00" x2="449.50" y2="366.50" stroke="#f45c5c" stroke-width="0.9" stroke-dasharray="5 1.5 1 1.5"/><line x1="373.00" y1="472.80" x2="493.60" y2="403.00" stroke="#f45c5c" stroke-width="0.9" stroke-dasharray="5 1.5 1 1.5"/><line x1="405.40" y1="416.00" x2="405.40" y2="492.30" stroke="#f45c5c" stroke-width="0.9" stroke-dasharray="5 1.5 1 1.5"/><ellipse cx="0" cy="0" rx="22.04" ry="12.73" transform="translate(390.60 463.00) rotate(60)" fill="none" stroke="#222" stroke-width="0.9" /><ellipse cx="0" cy="0" rx="19.60" ry="11.31" transform="translate(391.99 462.20) rotate(60)" fill="none" stroke="#222" stroke-width="0.9" /><line x1="379.58" y1="443.91" x2="410.75" y2="425.91" stroke="#222" stroke-width="0.9" /><line x1="401.62" y1="482.09" x2="432.80" y2="464.09" stroke="#222" stroke-width="0.9" /><path d="M410.75 425.91A22.04 12.73 60 0 1 432.80 464.09" fill="none" stroke="#222" stroke-width="0.9"/><ellipse cx="0" cy="0" rx="8.50" ry="5.60" transform="translate(405.30 437.50) rotate(20)" fill="none" stroke="#222" stroke-width="0.9" /><line x1="424.82" y1="429.10" x2="434.71" y2="423.39" stroke="#222" stroke-width="0.9" /><line x1="437.07" y1="450.31" x2="446.95" y2="444.61" stroke="#222" stroke-width="0.9" /><path d="M434.71 423.39A12.25 7.07 60 0 1 446.95 444.61" fill="none" stroke="#222" stroke-width="0.9"/><line x1="438.69" y1="423.07" x2="452.88" y2="414.88" stroke="#222" stroke-width="0.9" /><line x1="449.22" y1="441.32" x2="463.42" y2="433.12" stroke="#222" stroke-width="0.9" /><path d="M452.03 413.39A12.25 7.07 60 0 1 464.27 434.61" fill="none" stroke="#111" stroke-width="1.6"/><line x1="452.03" y1="413.39" x2="469.35" y2="403.39" stroke="#222" stroke-width="0.9" /><line x1="464.27" y1="434.61" x2="481.59" y2="424.61" stroke="#222" stroke-width="0.9" /><path d="M469.35 403.39A12.25 7.07 60 0 1 481.59 424.61" fill="none" stroke="#111" stroke-width="1.1"/><line x1="866.20" y1="412.40" x2="906.00" y2="435.50" stroke="#f45c5c" stroke-width="0.9" stroke-dasharray="5 1.5 1 1.5"/><line x1="886.50" y1="424.70" x2="975.50" y2="372.50" stroke="#f45c5c" stroke-width="0.9" stroke-dasharray="5 1.5 1 1.5"/><line x1="885.30" y1="402.00" x2="885.30" y2="445.50" stroke="#f45c5c" stroke-width="0.9" stroke-dasharray="5 1.5 1 1.5"/><line x1="901.60" y1="391.00" x2="901.60" y2="436.00" stroke="#f45c5c" stroke-width="0.9" stroke-dasharray="5 1.5 1 1.5"/><ellipse cx="0" cy="0" rx="20.50" ry="12.50" transform="translate(887.50 424.20) rotate(60)" fill="none" stroke="#222" stroke-width="0.9" /><ellipse cx="0" cy="0" rx="18.20" ry="11.10" transform="translate(889.06 423.30) rotate(60)" fill="none" stroke="#222" stroke-width="0.8" /><line x1="877.25" y1="406.45" x2="906.69" y2="389.45" stroke="#222" stroke-width="0.8" /><line x1="897.75" y1="441.95" x2="927.19" y2="424.95" stroke="#222" stroke-width="0.8" /><ellipse cx="0" cy="0" rx="20.50" ry="12.50" transform="translate(916.94 407.20) rotate(60)" fill="none" stroke="#222" stroke-width="0.8" /><ellipse cx="0" cy="0" rx="13.50" ry="8.20" transform="translate(914.35 408.70) rotate(60)" fill="none" stroke="#333" stroke-width="0.9" stroke-dasharray="2.5 1.2"/><ellipse cx="0" cy="0" rx="7.20" ry="4.80" transform="translate(901.00 397.50) rotate(20)" fill="none" stroke="#333" stroke-width="0.8" stroke-dasharray="2.5 1.2"/><ellipse cx="0" cy="0" rx="5.60" ry="4.40" transform="translate(897.00 429.50) rotate(20)" fill="none" stroke="#333" stroke-width="0.8" stroke-dasharray="2.5 1.2"/><line x1="895.00" y1="413.00" x2="895.00" y2="441.00" stroke="#555" stroke-width="0.7" stroke-dasharray="2 1.2"/><line x1="910.19" y1="395.51" x2="963.89" y2="364.51" stroke="#222" stroke-width="0.8" /><line x1="923.69" y1="418.89" x2="977.39" y2="387.89" stroke="#222" stroke-width="0.8" /><ellipse cx="0" cy="0" rx="13.50" ry="8.20" transform="translate(936.43 395.95) rotate(60)" fill="none" stroke="#222" stroke-width="1.3" stroke-dasharray="3 0.8"/><ellipse cx="0" cy="0" rx="13.50" ry="8.20" transform="translate(953.75 385.95) rotate(60)" fill="none" stroke="#111" stroke-width="1.5" /><ellipse cx="0" cy="0" rx="13.50" ry="8.20" transform="translate(970.64 376.20) rotate(60)" fill="none" stroke="#222" stroke-width="1.0" /><ellipse cx="0" cy="0" rx="10.53" ry="6.40" transform="translate(967.61 377.95) rotate(60)" fill="none" stroke="#333" stroke-width="0.8" stroke-dasharray="2.5 1.2"/><defs><radialGradient id="mg" cx="0.5" cy="0.5" r="0.5"><stop offset="0.76" stop-color="#fff" stop-opacity="0"/><stop offset="0.84" stop-color="#d4dee8" stop-opacity="0.6"/><stop offset="0.88" stop-color="#b8c8d6" stop-opacity="0.75"/><stop offset="0.92" stop-color="#c8d4de" stop-opacity="0.7"/><stop offset="0.96" stop-color="#a6b8c8" stop-opacity="0.85"/><stop offset="1" stop-color="#b4c4d2" stop-opacity="0.6"/></radialGradient></defs><circle cx="776.1" cy="224.6" r="39" fill="url(#mg)"/><path d="M776.4 225.3V246.6L781 241.9L785.2 251.6L789 250L785 240.6H791.3Z" fill="#fff" stroke="#000" stroke-width="1" stroke-linejoin="miter"/>
</svg></div>
<div id="vscroll" class="a"></div><div id="hscroll" class="a"></div>
<div id="cmdhist" class="a"></div><div id="cmdrow" class="a"></div>
<div id="layerpanel" class="a"></div><div id="rdock" class="a"></div>
<div id="status" class="a"></div>
<div class="a" style="left:1155px;top:108px;width:299px;height:22px;background:linear-gradient(#ececec,#dcdcdc)"></div><div class="a" style="left:1172px;top:112px;width:299px;text-align:center;font-size:12px;line-height:14px;color:#2a2a2a">Layer List</div><div class="a" style="left:1155px;top:130px;width:299px;height:26px;background:linear-gradient(#efefef,#e2e2e2);border-top:1px solid #c8c8c8;border-bottom:2px solid #bdbdbd"></div><div class="a" style="left:1183px;top:159.3px;font-size:13px;line-height:16px;color:#1a1a1a;letter-spacing:0.15px">0</div><div class="a" style="left:1183px;top:179.3px;font-size:13px;line-height:16px;color:#1a1a1a;letter-spacing:0.15px">Border</div><div class="a" style="left:1183px;top:199.3px;font-size:13px;line-height:16px;color:#1a1a1a;letter-spacing:0.15px">Center</div><div class="a" style="left:1183px;top:219.3px;font-size:13px;line-height:16px;color:#1a1a1a;letter-spacing:0.15px">Defpoints</div><div class="a" style="left:1183px;top:239.3px;font-size:13px;line-height:16px;color:#1a1a1a;letter-spacing:0.15px">Dimensions</div><div class="a" style="left:1183px;top:259.3px;font-size:13px;line-height:16px;color:#1a1a1a;letter-spacing:0.15px">Invisible</div><div class="a" style="left:1183px;top:279.3px;font-size:13px;line-height:16px;color:#1a1a1a;letter-spacing:0.15px">Thin</div><div class="a" style="left:1183px;top:299.3px;font-size:13px;line-height:16px;color:#1a1a1a;letter-spacing:0.15px">Title</div><div class="a" style="left:1183px;top:319.3px;font-size:13px;line-height:16px;color:#1a1a1a;letter-spacing:0.15px">Visible</div><svg class="a" style="left:0;top:0" width="1500" height="844" viewBox="0 0 1500 844"><circle cx="1164" cy="117.8" r="7" fill="#707070"/><path d="M1161 114.8L1167 120.8M1167 114.8L1161 120.8" stroke="#fff" stroke-width="1.6"/><circle cx="1181.9" cy="117.8" r="7" fill="#707070"/><rect x="1178.3" y="116.5" width="5" height="4.3" fill="none" stroke="#fff" stroke-width="1"/><path d="M1180.3 116.5V114.3H1185.3V118.8H1183.3" fill="none" stroke="#fff" stroke-width="1"/><rect x="1214.5" y="131" width="1.5" height="24" fill="#c4c4c4"/><rect x="1274.0" y="131" width="1.5" height="24" fill="#c4c4c4"/><rect x="1333.5" y="131" width="1.5" height="24" fill="#c4c4c4"/><rect x="1393.5" y="131" width="1.5" height="24" fill="#c4c4c4"/><g transform="translate(1184.8 142.6) scale(1.0)"><path d="M-7.6 0.4C-5.5 -6 5.5 -6 7.6 0.4C5.5 6.2 -5.5 6.2 -7.6 0.4Z" fill="#000"/><ellipse cx="0" cy="1" rx="4.9" ry="3.1" fill="#fff"/><circle cx="-0.2" cy="-0.1" r="2.4" fill="#000"/></g><g transform="translate(1244.8 142.6) scale(1.0)"><path d="M-7.6 0.4C-5.5 -6 5.5 -6 7.6 0.4C5.5 6.2 -5.5 6.2 -7.6 0.4Z" fill="#a8a8a8"/><ellipse cx="0" cy="1" rx="4.9" ry="3.1" fill="#fff"/><circle cx="-0.2" cy="-0.1" r="2.4" fill="#a8a8a8"/></g><path d="M1304.5 136.5V149M1298.2 142.7H1310.8" stroke="#e00000" stroke-width="3.2"/><path d="M1358.2 142.7H1370.8" stroke="#e00000" stroke-width="3.2"/><g transform="translate(1419.5 148.3) rotate(-45)"><rect x="0" y="-1.6" width="15.5" height="3.2" fill="#e8a838" stroke="#8a6018" stroke-width="0.5"/><rect x="13.5" y="-1.6" width="3" height="3.2" fill="#e02020"/><path d="M0 -1.6L-3.5 0L0 1.6Z" fill="#c8a070"/></g><g transform="translate(1396.3 172.2) rotate(-45)"><rect x="0" y="-1.6" width="15.5" height="3.2" fill="#e8a838" stroke="#8a6018" stroke-width="0.5"/><rect x="13.5" y="-1.6" width="3" height="3.2" fill="#e02020"/><path d="M0 -1.6L-3.5 0L0 1.6Z" fill="#c8a070"/></g><rect x="1161.5" y="163.4" width="15.3" height="8.3" fill="#fff" stroke="#000" stroke-width="1"/><g transform="translate(1423 166.5) scale(1.0)"><path d="M-7.6 0.4C-5.5 -6 5.5 -6 7.6 0.4C5.5 6.2 -5.5 6.2 -7.6 0.4Z" fill="#000"/><ellipse cx="0" cy="1" rx="4.9" ry="3.1" fill="#fff"/><circle cx="-0.2" cy="-0.1" r="2.4" fill="#000"/></g><path d="M1441.2 166.8V164.6Q1441.2 160.8 1444.9 160.8Q1448.6 160.8 1448.6 164.6V166.8" fill="none" stroke="#b8b8b8" stroke-width="1.3"/><rect x="1440" y="166.6" width="9.8" height="7" fill="#b8b8b8"/><rect x="1161.5" y="183.4" width="15.3" height="8.3" fill="#000" stroke="#000" stroke-width="1"/><g transform="translate(1423 186.5) scale(1.0)"><path d="M-7.6 0.4C-5.5 -6 5.5 -6 7.6 0.4C5.5 6.2 -5.5 6.2 -7.6 0.4Z" fill="#000"/><ellipse cx="0" cy="1" rx="4.9" ry="3.1" fill="#fff"/><circle cx="-0.2" cy="-0.1" r="2.4" fill="#000"/></g><path d="M1441.2 186.8V184.6Q1441.2 180.8 1444.9 180.8Q1448.6 180.8 1448.6 184.6V186.8" fill="none" stroke="#b8b8b8" stroke-width="1.3"/><rect x="1440" y="186.6" width="9.8" height="7" fill="#b8b8b8"/><rect x="1161.5" y="203.4" width="15.3" height="8.3" fill="#f00" stroke="#000" stroke-width="1"/><g transform="translate(1423 206.5) scale(1.0)"><path d="M-7.6 0.4C-5.5 -6 5.5 -6 7.6 0.4C5.5 6.2 -5.5 6.2 -7.6 0.4Z" fill="#000"/><ellipse cx="0" cy="1" rx="4.9" ry="3.1" fill="#fff"/><circle cx="-0.2" cy="-0.1" r="2.4" fill="#000"/></g><path d="M1441.2 206.8V204.6Q1441.2 200.8 1444.9 200.8Q1448.6 200.8 1448.6 204.6V206.8" fill="none" stroke="#b8b8b8" stroke-width="1.3"/><rect x="1440" y="206.6" width="9.8" height="7" fill="#b8b8b8"/><rect x="1161.5" y="223.4" width="15.3" height="8.3" fill="#fff" stroke="#000" stroke-width="1"/><g transform="translate(1423 226.5) scale(1.0)"><path d="M-7.6 0.4C-5.5 -6 5.5 -6 7.6 0.4C5.5 6.2 -5.5 6.2 -7.6 0.4Z" fill="#000"/><ellipse cx="0" cy="1" rx="4.9" ry="3.1" fill="#fff"/><circle cx="-0.2" cy="-0.1" r="2.4" fill="#000"/></g><path d="M1441.2 226.8V224.6Q1441.2 220.8 1444.9 220.8Q1448.6 220.8 1448.6 224.6V226.8" fill="none" stroke="#b8b8b8" stroke-width="1.3"/><rect x="1440" y="226.6" width="9.8" height="7" fill="#b8b8b8"/><rect x="1161.5" y="243.4" width="15.3" height="8.3" fill="#1e90ff" stroke="#000" stroke-width="1"/><g transform="translate(1423 246.5) scale(1.0)"><path d="M-7.6 0.4C-5.5 -6 5.5 -6 7.6 0.4C5.5 6.2 -5.5 6.2 -7.6 0.4Z" fill="#000"/><ellipse cx="0" cy="1" rx="4.9" ry="3.1" fill="#fff"/><circle cx="-0.2" cy="-0.1" r="2.4" fill="#000"/></g><path d="M1441.2 246.8V244.6Q1441.2 240.8 1444.9 240.8Q1448.6 240.8 1448.6 244.6V246.8" fill="none" stroke="#b8b8b8" stroke-width="1.3"/><rect x="1440" y="246.6" width="9.8" height="7" fill="#b8b8b8"/><rect x="1161.5" y="263.4" width="15.3" height="8.3" fill="#000" stroke="#000" stroke-width="1"/><g transform="translate(1423 266.5) scale(1.0)"><path d="M-7.6 0.4C-5.5 -6 5.5 -6 7.6 0.4C5.5 6.2 -5.5 6.2 -7.6 0.4Z" fill="#000"/><ellipse cx="0" cy="1" rx="4.9" ry="3.1" fill="#fff"/><circle cx="-0.2" cy="-0.1" r="2.4" fill="#000"/></g><path d="M1441.2 266.8V264.6Q1441.2 260.8 1444.9 260.8Q1448.6 260.8 1448.6 264.6V266.8" fill="none" stroke="#b8b8b8" stroke-width="1.3"/><rect x="1440" y="266.6" width="9.8" height="7" fill="#b8b8b8"/><rect x="1161.5" y="283.4" width="15.3" height="8.3" fill="#000" stroke="#000" stroke-width="1"/><g transform="translate(1423 286.5) scale(1.0)"><path d="M-7.6 0.4C-5.5 -6 5.5 -6 7.6 0.4C5.5 6.2 -5.5 6.2 -7.6 0.4Z" fill="#000"/><ellipse cx="0" cy="1" rx="4.9" ry="3.1" fill="#fff"/><circle cx="-0.2" cy="-0.1" r="2.4" fill="#000"/></g><path d="M1441.2 286.8V284.6Q1441.2 280.8 1444.9 280.8Q1448.6 280.8 1448.6 284.6V286.8" fill="none" stroke="#b8b8b8" stroke-width="1.3"/><rect x="1440" y="286.6" width="9.8" height="7" fill="#b8b8b8"/><rect x="1161.5" y="303.4" width="15.3" height="8.3" fill="#000" stroke="#000" stroke-width="1"/><g transform="translate(1423 306.5) scale(1.0)"><path d="M-7.6 0.4C-5.5 -6 5.5 -6 7.6 0.4C5.5 6.2 -5.5 6.2 -7.6 0.4Z" fill="#000"/><ellipse cx="0" cy="1" rx="4.9" ry="3.1" fill="#fff"/><circle cx="-0.2" cy="-0.1" r="2.4" fill="#000"/></g><path d="M1441.2 306.8V304.6Q1441.2 300.8 1444.9 300.8Q1448.6 300.8 1448.6 304.6V306.8" fill="none" stroke="#b8b8b8" stroke-width="1.3"/><rect x="1440" y="306.6" width="9.8" height="7" fill="#b8b8b8"/><rect x="1161.5" y="323.4" width="15.3" height="8.3" fill="#000" stroke="#000" stroke-width="1"/><g transform="translate(1423 326.5) scale(1.0)"><path d="M-7.6 0.4C-5.5 -6 5.5 -6 7.6 0.4C5.5 6.2 -5.5 6.2 -7.6 0.4Z" fill="#000"/><ellipse cx="0" cy="1" rx="4.9" ry="3.1" fill="#fff"/><circle cx="-0.2" cy="-0.1" r="2.4" fill="#000"/></g><path d="M1441.2 326.8V324.6Q1441.2 320.8 1444.9 320.8Q1448.6 320.8 1448.6 324.6V326.8" fill="none" stroke="#b8b8b8" stroke-width="1.3"/><rect x="1440" y="326.6" width="9.8" height="7" fill="#b8b8b8"/></svg>
<svg class="a" style="left:0;top:0" width="1500" height="844" viewBox="0 0 1500 844"><rect x="1462.0" y="116.3" width="1.5" height="1.5" fill="#999"/><rect x="1468.0" y="116.3" width="1.5" height="1.5" fill="#999"/><rect x="1474.0" y="116.3" width="1.5" height="1.5" fill="#999"/><rect x="1480.0" y="116.3" width="1.5" height="1.5" fill="#999"/><rect x="1486.0" y="116.3" width="1.5" height="1.5" fill="#999"/><rect x="1456.4" y="120" width="42" height="42.2" rx="5" fill="#b9b9b9"/><rect x="1463.7" y="127.8" width="27" height="26.5" fill="#fff" stroke="#333" stroke-width="1"/><rect x="1463.2" y="127.3" width="28" height="4.3" fill="#000"/><rect x="1464.7" y="128.3" width="3.5" height="3" fill="#fff"/><path d="M1470 149L1470 140L1474 137.5V146.5Z" fill="#ccc" stroke="#555" stroke-width="0.7"/><path d="M1474 137.5L1486 132.5V141.5L1474 146.5Z" fill="#fff" stroke="#555" stroke-width="0.7"/><path d="M1478 143L1482 136M1480 140.5H1483" stroke="#f03030" stroke-width="0.8"/><rect x="1463.7" y="175.0" width="27" height="26.5" fill="#fff" stroke="#333" stroke-width="1"/><rect x="1463.2" y="174.5" width="28" height="4.3" fill="#000"/><rect x="1464.7" y="175.5" width="3.5" height="3" fill="#fff"/><rect x="1470.5" y="182" width="11" height="9" fill="#f3eccc" stroke="#777" stroke-width="0.8"/><circle cx="1478.8" cy="192" r="5" fill="#f3eccc" stroke="#777" stroke-width="0.8"/><rect x="1463.7" y="220.5" width="27" height="26.5" fill="#fff" stroke="#333" stroke-width="1"/><rect x="1463.2" y="220" width="28" height="4.3" fill="#000"/><rect x="1464.7" y="221" width="3.5" height="3" fill="#fff"/><rect x="1468" y="229.5" width="18" height="12" rx="2" fill="#f4f7ff" stroke="#b8c8e8" stroke-width="1"/><line x1="1458" y1="260.5" x2="1498" y2="260.5" stroke="#888" stroke-width="1" stroke-dasharray="1 2"/><rect x="1463.7" y="276.2" width="27" height="26.5" fill="#fff" stroke="#333" stroke-width="1"/><rect x="1463.2" y="275.7" width="28" height="4.3" fill="#000"/><rect x="1464.7" y="276.7" width="3.5" height="3" fill="#fff"/><rect x="1467.5" y="282.0" width="3.2" height="3.2" fill="#000"/><rect x="1473" y="282.0" width="13" height="3.4" fill="none" stroke="#333" stroke-width="0.8"/><rect x="1467.5" y="287.8" width="3.2" height="3.2" fill="#000"/><rect x="1473" y="287.8" width="13" height="3.4" fill="none" stroke="#333" stroke-width="0.8"/><rect x="1467.5" y="293.6" width="3.2" height="3.2" fill="#000"/><rect x="1473" y="293.6" width="13" height="3.4" fill="none" stroke="#333" stroke-width="0.8"/><rect x="1463.7" y="321.5" width="27" height="26.5" fill="#fff" stroke="#333" stroke-width="1"/><rect x="1463.2" y="321" width="28" height="4.3" fill="#000"/><rect x="1464.7" y="322" width="3.5" height="3" fill="#fff"/><path d="M1469 333H1485L1479 339.5V345.5L1475 343.5V339.5Z" fill="#d8d8d8" stroke="#555" stroke-width="0.8"/><rect x="1463.7" y="367.1" width="27" height="26.5" fill="#fff" stroke="#333" stroke-width="1"/><rect x="1463.2" y="366.6" width="28" height="4.3" fill="#000"/><rect x="1464.7" y="367.6" width="3.5" height="3" fill="#fff"/><path d="M1469.5 374.5L1476 378V385L1469.5 388.5Z" fill="#fff" stroke="#555" stroke-width="0.8"/><rect x="1476" y="377" width="9.5" height="8.5" fill="#888"/><path d="M1466 381.5H1488" stroke="#f07070" stroke-width="0.7" stroke-dasharray="2 1"/><line x1="1458" y1="408.8" x2="1498" y2="408.8" stroke="#888" stroke-width="1" stroke-dasharray="1 2"/><rect x="1456.4" y="416" width="42" height="41.5" rx="5" fill="#b9b9b9"/><rect x="1463.7" y="422.9" width="27" height="26.5" fill="#fff" stroke="#333" stroke-width="1"/><rect x="1463.2" y="422.4" width="28" height="4.3" fill="#000"/><rect x="1464.7" y="423.4" width="3.5" height="3" fill="#fff"/><path d="M1467 432H1476M1467 435H1479M1467 438H1480M1467 441H1478" stroke="#777" stroke-width="0.6"/><path d="M1464 445.5H1491" stroke="#333" stroke-width="0.6"/><rect x="1463.7" y="470.5" width="27" height="26.5" fill="#fff" stroke="#333" stroke-width="1"/><rect x="1463.2" y="470" width="28" height="4.3" fill="#000"/><rect x="1464.7" y="471" width="3.5" height="3" fill="#fff"/><rect x="1469.5" y="478.5" width="14.5" height="15.5" rx="1" fill="#c98a2a"/><rect x="1471" y="480.5" width="11.5" height="12" fill="#f4f4f4"/><rect x="1473.5" y="477" width="6.5" height="3" fill="#888"/><rect x="1498.5" y="107" width="1.5" height="692" fill="#c8c8c8"/></svg>
<div class="a" style="left:254px;top:737px;width:671px;height:8px;border-radius:4px;background:#7b7b7b;box-shadow:0 0 0 1px #fff"></div><div class="a" style="left:1143px;top:304px;width:8px;height:279px;border-radius:4px;background:#7b7b7b;box-shadow:0 0 0 1px #fff"></div><div class="a" style="left:1083px;top:732px;width:71px;height:16px;background:#ececec"></div><div class="a" style="left:1083px;top:733px;width:70px;text-align:right;font-size:13px;line-height:15px;color:#111">10 &lt; 100</div><div class="a" style="left:77px;top:750px;font-size:13px;line-height:16px;color:#0000e0;letter-spacing:0.3px"><i>Command:</i> printpreview</div><div class="a" style="left:73px;top:778px;font-size:13px;line-height:16px;color:#111;letter-spacing:0.45px">Command:</div><div class="a" style="left:142px;top:776px;width:985px;height:18px;background:#fff"></div><div class="a" style="left:1127px;top:772px;width:26px;height:26px;background:linear-gradient(#f2f2f2,#e2e2e2);border:1px solid #b4b4b4"></div><svg class="a" style="left:0;top:0" width="1500" height="844" viewBox="0 0 1500 844"><rect x="1133.5" y="780.5" width="13.5" height="9.5" fill="#eee" stroke="#444" stroke-width="1"/><rect x="1133" y="780" width="14.5" height="3" fill="#000"/></svg><div class="a" style="left:1px;top:806px;font-size:10.5px;line-height:13px;color:#1a1a1a">124.6231,60.2643</div><div class="a" style="left:1px;top:826px;font-size:10.5px;line-height:13px;color:#1a1a1a">@124.6231,60.2643</div><div class="a" style="left:253px;top:802px;width:1px;height:40px;background:#888"></div><div class="a" style="left:256px;top:806px;font-size:10.5px;line-height:13px;color:#1a1a1a">138.4294&lt;26°</div><div class="a" style="left:256px;top:826px;font-size:10.5px;line-height:13px;color:#1a1a1a">@138.4294&lt;26°</div><div class="a" style="left:506px;top:818px;width:7px;height:7px;border-radius:50%;background:#c8c8c8"></div><div class="a" style="left:1268px;top:818px;width:7px;height:7px;border-radius:50%;background:#c8c8c8"></div><div class="a" style="left:940px;top:818px;width:6px;height:6px;border-radius:50%;background:#c8c8c8"></div><div class="a" style="left:949px;top:816px;font-size:10.5px;line-height:13px;color:#1a1a1a">No entities selected.</div><svg class="a" style="left:0;top:0" width="1500" height="844" viewBox="0 0 1500 844"><rect x="717.5" y="806" width="17" height="29.5" rx="8.5" fill="#fff" stroke="#333" stroke-width="0.9"/><path d="M717.5 818.5Q726 815.5 734.5 818.5" fill="none" stroke="#333" stroke-width="1.2"/><rect x="724.5" y="809" width="3" height="7.5" rx="1.5" fill="none" stroke="#333" stroke-width="0.8"/></svg>
<div class="a" style="left:595px;top:113px;font-size:12px;line-height:14px;color:#1a1a1a">part_05.12.dxf</div>
<svg class="a" style="left:0;top:0" width="1500" height="844" viewBox="0 0 1500 844"><circle cx="102" cy="118.5" r="6.2" fill="#e8eef8" stroke="#2e4a8a" stroke-width="1.8"/><path d="M101 117L106 123" stroke="#e0a020" stroke-width="2"/><path d="M98 119H103M100 116L102 120" stroke="#c44" stroke-width="0.6"/></svg>
<svg class="a" style="left:0;top:0" width="1500" height="844" viewBox="0 0 1500 844"><path d="M85 219.5V230.5L90.5 225Z" fill="#000"/><path d="M770.5 145H781.5L776 150.5Z" fill="#000"/><rect x="76" y="731" width="4.5" height="1.2" fill="#222"/></svg></body></html>
